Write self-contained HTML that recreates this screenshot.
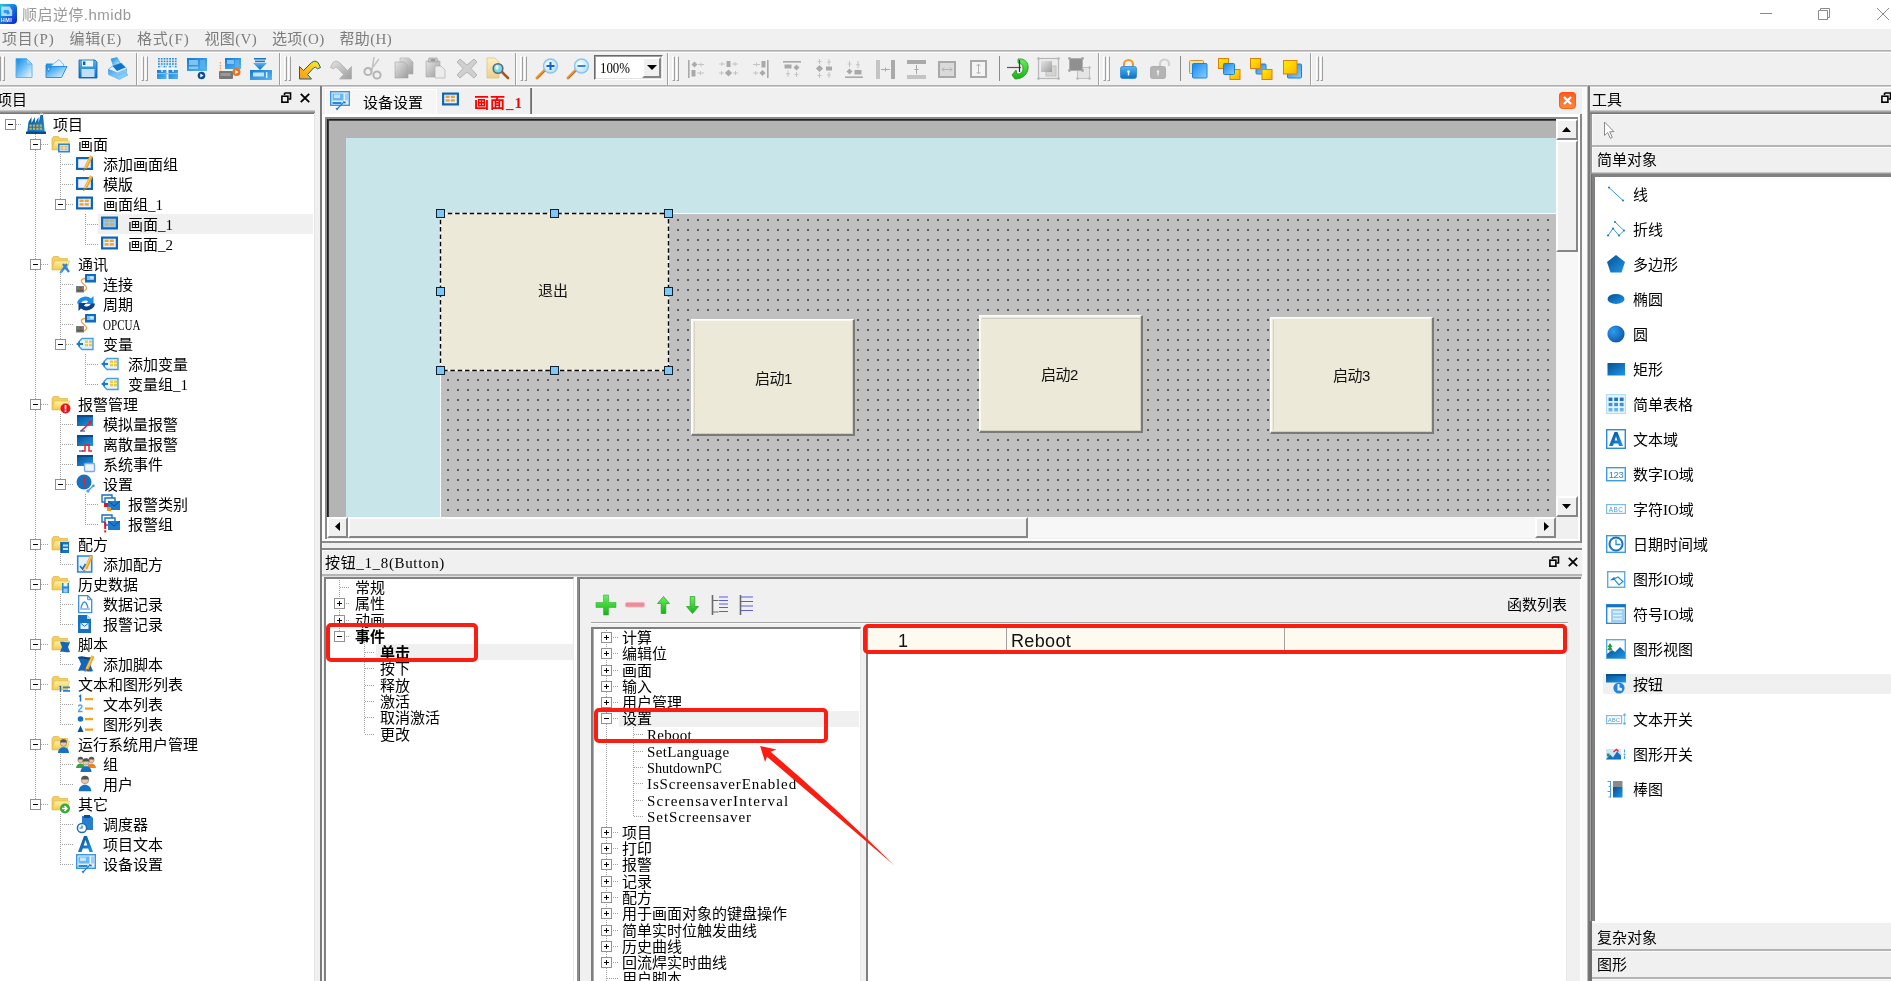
<!DOCTYPE html>
<html lang="zh-CN"><head><meta charset="utf-8"><title>HMI</title>
<style>
html,body{margin:0;padding:0;}
body{width:1891px;height:981px;position:relative;overflow:hidden;background:#f0f0f0;
 font-family:"Liberation Sans","Noto Sans CJK SC",sans-serif;font-size:15px;color:#000;}
div{position:absolute;box-sizing:border-box;}
#root{left:0;top:0;width:1891px;height:981px;will-change:transform;}
svg{position:absolute;overflow:visible;}
.t{white-space:nowrap;line-height:22px;height:22px;font-size:15px;}
.s{font-family:"Liberation Serif",serif;}
.b{font-weight:bold;}
.m{color:#7c7c7c;}
.exp{width:11px;height:11px;border:1px solid #919191;background:#fff;}
.exp i{position:absolute;left:2px;top:4px;width:5px;height:1px;background:#000;}
.exp b{position:absolute;left:4px;top:2px;width:1px;height:5px;background:#000;}
.dv{width:1px;background-image:linear-gradient(#a0a0a0 50%,transparent 50%);background-size:1px 2px;}
.dh{height:1px;background-image:linear-gradient(90deg,#a0a0a0 50%,transparent 50%);background-size:2px 1px;}
.grip{width:7px;height:25px;}
.grip:before,.grip:after{content:"";position:absolute;top:0;width:3px;height:25px;box-sizing:border-box;
 border-left:1px solid #fff;border-top:1px solid #fff;border-right:1px solid #a0a0a0;border-bottom:1px solid #a0a0a0;background:#f0f0f0}
.grip:before{left:0}.grip:after{left:4px}
.sb{background:#f0f0f0;border:2px solid;border-color:#fff #868686 #868686 #fff;}
.btn3d{background:#ece9d8;border-style:solid;border-width:1px 2px 2px 1px;border-color:#fff #7a7a7a #7a7a7a #fff;box-shadow:inset -1px -1px 0 #d2cfbd,inset 1px 1px 0 #f8f7f0;}
.hd{width:9px;height:9px;background:#7fc8f8;border:1px solid #10202c;}
.red{border:4px solid #fb1d12;border-radius:5px;}
</style></head>
<body>
<div id="root">
<svg width="0" height="0" style="left:0;top:0"><defs>
<linearGradient id="gb" x1="0" y1="0" x2="1" y2="1"><stop offset="0" stop-color="#1a8de0"/><stop offset="1" stop-color="#bfe4fb"/></linearGradient>
<linearGradient id="gnew" x1="0" y1="0" x2="1" y2="1"><stop offset="0" stop-color="#0a86e8"/><stop offset=".45" stop-color="#6abcf4"/><stop offset="1" stop-color="#f4fbff"/></linearGradient>
<linearGradient id="gtb" x1="0" y1="0" x2="1" y2="1"><stop offset="0" stop-color="#1478d0"/><stop offset="1" stop-color="#58b6f4"/></linearGradient>
<linearGradient id="gb2" x1="0" y1="0" x2="0" y2="1"><stop offset="0" stop-color="#56b4f0"/><stop offset="1" stop-color="#0b6fc0"/></linearGradient>
<linearGradient id="gb3" x1="0" y1="0" x2="1" y2="1"><stop offset="0" stop-color="#07508f"/><stop offset="1" stop-color="#1e96ec"/></linearGradient>
<linearGradient id="gy" x1="0" y1="0" x2="0" y2="1"><stop offset="0" stop-color="#fff2a8"/><stop offset="1" stop-color="#f2c84a"/></linearGradient>
<linearGradient id="gyp" x1="0" y1="0" x2="0" y2="1"><stop offset="0" stop-color="#fbf0c8"/><stop offset="1" stop-color="#ecd08a"/></linearGradient>
<linearGradient id="go" x1="0" y1="0" x2="0" y2="1"><stop offset="0" stop-color="#ffe23a"/><stop offset="1" stop-color="#f59a1c"/></linearGradient>
<linearGradient id="gyl" x1="0" y1="0" x2="1" y2="1"><stop offset="0" stop-color="#fff200"/><stop offset="1" stop-color="#ffae00"/></linearGradient>
<linearGradient id="gbl" x1="0" y1="0" x2="1" y2="1"><stop offset="0" stop-color="#1486f0"/><stop offset="1" stop-color="#8ad0ff"/></linearGradient>
<linearGradient id="gund" x1="1" y1="0" x2="0" y2="1"><stop offset="0" stop-color="#fff020"/><stop offset="1" stop-color="#f8981c"/></linearGradient>
<linearGradient id="gg" x1="0" y1="0" x2="1" y2="1"><stop offset="0" stop-color="#e4e4e4"/><stop offset="1" stop-color="#9c9c9c"/></linearGradient>
<linearGradient id="ggr" x1="0" y1="0" x2="0" y2="1"><stop offset="0" stop-color="#6cf060"/><stop offset="1" stop-color="#12b412"/></linearGradient>
<linearGradient id="gor" x1="0" y1="0" x2="0" y2="1"><stop offset="0" stop-color="#ff5a1a"/><stop offset="1" stop-color="#ff8a3c"/></linearGradient>
<linearGradient id="gapp" x1="0" y1="0" x2="1" y2="1"><stop offset="0" stop-color="#22d6d4"/><stop offset="0.5" stop-color="#1c74e4"/><stop offset="1" stop-color="#0a1ed0"/></linearGradient>
<radialGradient id="gball" cx="0.35" cy="0.35" r="0.8"><stop offset="0" stop-color="#2f9cf0"/><stop offset="1" stop-color="#0a4fa0"/></radialGradient>
<radialGradient id="glens" cx="0.4" cy="0.4" r="0.7"><stop offset="0" stop-color="#ffffff"/><stop offset="1" stop-color="#a8dcf8"/></radialGradient>
</defs></svg>
<div style="left:0px;top:0px;width:1891px;height:29px;background:#fff;"></div>
<svg style="left:0px;top:4px" width="18" height="20" viewBox="0 0 18 20"><path d="M-2 0h15a4 4 0 0 1 4 4v12a4 4 0 0 1-4 4h-15z" fill="url(#gapp)"/><path d="M1.200 2.500h8.500l2.500 4v5.500h-11z" fill="#bfe2f8" opacity=".9"/><path d="M6.500 4.500a1.700 1.700 0 0 1 1.300 2.800a1.700 1.700 0 0 1-1.300 2.800a1.700 1.700 0 0 1-2.600 0a1.700 1.700 0 0 1 1.300-2.800a1.700 1.700 0 0 1 1.300-2.800z" fill="#2a9cf0" transform="rotate(-90 6.5 7.5) translate(0 0)"/><text x="6.500" y="18.300" font-family="Liberation Sans,sans-serif" font-size="5.500" font-weight="bold" fill="#e8f6ff" text-anchor="middle" letter-spacing=".4">HMI</text></svg>
<div class="t" style="left:22px;top:4px;color:#999;font-size:15px;letter-spacing:.45px;">顺启逆停.hmidb</div>
<svg style="left:1750px;top:0" width="141" height="29" viewBox="1750 0 141 29" fill="none" stroke="#8a8a8a" stroke-width="1"><path d="M1760 13.5H1772"/><path d="M1818.5 10.5h9v9h-9z"/><path d="M1820.500 10.500v-2h9v9h-1.500"/><path d="M1877 8l12 12M1889 8l-12 12"/></svg>
<div style="left:0px;top:29px;width:1891px;height:21px;background:#f0f0f0;"></div>
<div class="t m" style="left:2.0px;top:28px;font-family:'Liberation Serif','Noto Sans CJK SC',serif;letter-spacing:0.83px;">项目(P)</div>
<div class="t m" style="left:69.5px;top:28px;font-family:'Liberation Serif','Noto Sans CJK SC',serif;letter-spacing:0.67px;">编辑(E)</div>
<div class="t m" style="left:137.0px;top:28px;font-family:'Liberation Serif','Noto Sans CJK SC',serif;letter-spacing:0.83px;">格式(F)</div>
<div class="t m" style="left:204.5px;top:28px;font-family:'Liberation Serif','Noto Sans CJK SC',serif;letter-spacing:0.34px;">视图(V)</div>
<div class="t m" style="left:272.0px;top:28px;font-family:'Liberation Serif','Noto Sans CJK SC',serif;letter-spacing:0.34px;">选项(O)</div>
<div class="t m" style="left:339.5px;top:28px;font-family:'Liberation Serif','Noto Sans CJK SC',serif;letter-spacing:0.34px;">帮助(H)</div>
<div style="left:0px;top:50px;width:1891px;height:1px;background:#b0b0b0;"></div>
<div style="left:0px;top:51px;width:1891px;height:1px;background:#cacaca;"></div>
<div style="left:0px;top:52px;width:1891px;height:1px;background:#fdfdfd;"></div>
<div style="left:0px;top:85px;width:1891px;height:1px;background:#b0b0b0;"></div>
<div style="left:0px;top:86px;width:1891px;height:1px;background:#cacaca;"></div>
<div style="left:0px;top:87px;width:1891px;height:1px;background:#fdfdfd;"></div>
<div style="left:136px;top:53px;width:1px;height:32px;background:#a0a0a0;"></div>
<div style="left:137px;top:53px;width:1px;height:32px;background:#fff;"></div>
<div style="left:279px;top:53px;width:1px;height:32px;background:#a0a0a0;"></div>
<div style="left:280px;top:53px;width:1px;height:32px;background:#fff;"></div>
<div style="left:515px;top:53px;width:1px;height:32px;background:#a0a0a0;"></div>
<div style="left:516px;top:53px;width:1px;height:32px;background:#fff;"></div>
<div style="left:667px;top:53px;width:1px;height:32px;background:#a0a0a0;"></div>
<div style="left:668px;top:53px;width:1px;height:32px;background:#fff;"></div>
<div style="left:1098px;top:53px;width:1px;height:32px;background:#a0a0a0;"></div>
<div style="left:1099px;top:53px;width:1px;height:32px;background:#fff;"></div>
<div style="left:1310px;top:53px;width:1px;height:32px;background:#a0a0a0;"></div>
<div style="left:1311px;top:53px;width:1px;height:32px;background:#fff;"></div>
<div class="grip" style="left:-2px;top:56px"></div>
<div class="grip" style="left:141px;top:56px"></div>
<div class="grip" style="left:284px;top:56px"></div>
<div class="grip" style="left:520px;top:56px"></div>
<div class="grip" style="left:672px;top:56px"></div>
<div class="grip" style="left:1103px;top:56px"></div>
<div class="grip" style="left:1316px;top:56px"></div>
<div style="left:999px;top:56px;width:1px;height:25px;background:#8a8a8a;"></div>
<div style="left:1180px;top:56px;width:1px;height:25px;background:#8a8a8a;"></div>
<svg style="left:15px;top:57px" width="18" height="22" viewBox="0 0 18 22"><path d="M1 1.500h10.500l5.500 5.500v13.500h-16z" fill="url(#gnew)" stroke="#5aaeea" stroke-width=".9"/><path d="M11.500 1.500v5.500h5.500z" fill="#9fd4f8" stroke="#5aaeea" stroke-width=".7"/></svg>
<svg style="left:45px;top:58px" width="23" height="21" viewBox="0 0 23 21"><path d="M1 5.500h6.500l1.500 2h4v3h-12z" fill="#2a92e4"/><path d="M6 8l8-6.500 5 5.500-5 5z" fill="#e4f3ff" stroke="#5aaeea" stroke-width=".8"/><path d="M1 7v12.500h15.500l5.500-11h-15.500l-3 5z" fill="url(#gnew)" stroke="#1f86dc" stroke-width=".9" stroke-linejoin="round"/></svg>
<svg style="left:78px;top:59px" width="20" height="20" viewBox="0 0 20 20"><path d="M1 1h16l2 2v16h-18z" fill="url(#gb2)" stroke="#0a5cae" stroke-width=".8"/><rect x="4" y="1.5" width="11" height="6" fill="#eaf6ff"/><rect x="5" y="2.5" width="2.4" height="3.5" fill="#0a5cae"/><rect x="3.5" y="10" width="13" height="8" fill="#bfe0fa"/></svg>
<svg style="left:107px;top:57px" width="22" height="24" viewBox="0 0 22 24"><path d="M4 2l6-1.500 4 7-7 2.500z" fill="url(#gnew)" stroke="#3b9be0" stroke-width=".7"/><path d="M1.500 12l4-3 9-3 5 5.500v5l-9 5-9-4z" fill="#dfefff" stroke="#4aa4e8" stroke-width=".7"/><path d="M5.500 9l8.500-3 4.500 4.500-8.500 3.500z" fill="#0f74c8"/><path d="M1.500 12l9 3.500 9-4v5l-9 5-9-4z" fill="url(#gb)" opacity=".85"/><path d="M8.500 19.500l9-4 3.500 2.500-9 4.500z" fill="#7fd0ff" stroke="#58aee8" stroke-width=".6"/></svg>
<svg style="left:157px;top:58px" width="21" height="22" viewBox="0 0 21 22"><rect x="1.0" y="0.0" width="1.8" height="1.6" fill="#2a90dc"/><rect x="3.8" y="0.0" width="1.8" height="1.6" fill="#2a90dc"/><rect x="6.6" y="0.0" width="1.8" height="1.6" fill="#2a90dc"/><rect x="9.4" y="0.0" width="1.8" height="1.6" fill="#2a90dc"/><rect x="12.2" y="0.0" width="1.8" height="1.6" fill="#2a90dc"/><rect x="15.0" y="0.0" width="1.8" height="1.6" fill="#2a90dc"/><rect x="17.8" y="0.0" width="1.8" height="1.6" fill="#2a90dc"/><rect x="1.0" y="2.6" width="1.8" height="1.6" fill="#2a90dc"/><rect x="3.8" y="2.6" width="1.8" height="1.6" fill="#2a90dc"/><rect x="6.6" y="2.6" width="1.8" height="1.6" fill="#2a90dc"/><rect x="9.4" y="2.6" width="1.8" height="1.6" fill="#2a90dc"/><rect x="12.2" y="2.6" width="1.8" height="1.6" fill="#2a90dc"/><rect x="15.0" y="2.6" width="1.8" height="1.6" fill="#2a90dc"/><rect x="17.8" y="2.6" width="1.8" height="1.6" fill="#2a90dc"/><rect x="1.0" y="5.2" width="1.8" height="1.6" fill="#2a90dc"/><rect x="3.8" y="5.2" width="1.8" height="1.6" fill="#2a90dc"/><rect x="6.6" y="5.2" width="1.8" height="1.6" fill="#2a90dc"/><rect x="9.4" y="5.2" width="1.8" height="1.6" fill="#2a90dc"/><rect x="12.2" y="5.2" width="1.8" height="1.6" fill="#2a90dc"/><rect x="15.0" y="5.2" width="1.8" height="1.6" fill="#2a90dc"/><rect x="17.8" y="5.2" width="1.8" height="1.6" fill="#2a90dc"/><rect x="1.0" y="7.8" width="1.8" height="1.6" fill="#2a90dc"/><rect x="3.8" y="7.8" width="1.8" height="1.6" fill="#2a90dc"/><rect x="6.6" y="7.8" width="1.8" height="1.6" fill="#2a90dc"/><rect x="9.4" y="7.8" width="1.8" height="1.6" fill="#2a90dc"/><rect x="12.2" y="7.8" width="1.8" height="1.6" fill="#2a90dc"/><rect x="15.0" y="7.8" width="1.8" height="1.6" fill="#2a90dc"/><rect x="17.8" y="7.8" width="1.8" height="1.6" fill="#2a90dc"/><rect x="0" y="12" width="9.5" height="9" fill="url(#gtb)"/><rect x="11.5" y="12" width="9.5" height="9" fill="url(#gtb)"/><path d="M5 8v6M10.5 8v7M16 8v6" stroke="#fff" stroke-width="1.2"/><rect x="0" y="15" width="21" height="1.2" fill="#7cc4f4"/></svg>
<svg style="left:187px;top:58px" width="21" height="22" viewBox="0 0 21 22"><rect x="0" y="0" width="20" height="13" fill="url(#gtb)"/><rect x="2" y="2" width="9" height="5" fill="#7cc4f4"/><rect x="13" y="2" width="5" height="9" fill="#5ab2ee" opacity=".8"/><rect x="2" y="8.5" width="9" height="2.5" fill="#9fd4f8" opacity=".8"/><circle cx="14.5" cy="17.5" r="3.8" fill="#0a4f96"/><path d="M13.3 15.5l3.3 2-3.3 2z" fill="#fff"/></svg>
<svg style="left:219px;top:58px" width="22" height="22" viewBox="0 0 22 22"><rect x="6" y="0" width="16" height="11" fill="url(#gtb)"/><rect x="8" y="2" width="7" height="4" fill="#7cc4f4"/><rect x="16" y="2" width="4" height="7" fill="#5ab2ee" opacity=".8"/><path d="M1.5 4v9" stroke="#f5a35a" stroke-width="1.4" stroke-dasharray="1.6 1.2"/><rect x="0" y="13" width="14" height="8" rx="1" fill="#777"/><rect x="1.5" y="15" width="10" height="3" fill="#9a9a9a"/><circle cx="17.5" cy="14" r="4" fill="#f0701c"/><path d="M16.3 12l3.3 2-3.3 2z" fill="#fff"/></svg>
<svg style="left:250px;top:58px" width="22" height="22" viewBox="0 0 22 22"><rect x="4" y="0" width="12" height="1.6" fill="#1478cc"/><rect x="5" y="2.6" width="10" height="1.6" fill="#1478cc"/><path d="M3 5h14l-7 7z" fill="url(#gb2)"/><rect x="0" y="12" width="22" height="10" fill="url(#gtb)"/><rect x="3" y="14.5" width="11" height="4" fill="#bfe4fb"/><rect x="16" y="14" width="1.4" height="6" fill="#d6eefc"/></svg>
<svg style="left:298px;top:58px" width="24" height="22" viewBox="0 0 24 22"><path d="M1.500 21V8.500L5.500 12.500L13.500 4.500Q17 1.500 20 4.500L22.500 9.500L19.500 10.800Q17.500 8 15.500 10L9.500 16.500L13.500 21z" fill="url(#gund)" stroke="#1d5c8c" stroke-width="1" stroke-linejoin="round"/></svg>
<svg style="left:329px;top:58px" width="24" height="22" viewBox="0 0 24 22"><path d="M22.500 21V8.500L18.500 12.500L10.500 4.500Q7 1.500 4 4.500L1.500 9.500L4.500 10.800Q6.500 8 8.500 10L14.500 16.500L10.500 21z" fill="url(#gg)" stroke="#b0b0b0" stroke-width=".8" stroke-linejoin="round"/></svg>
<svg style="left:363px;top:57px" width="20" height="23" viewBox="0 0 20 23"><path d="M11 0l-2 13M16 2l-9 12" stroke="#c4c4c4" stroke-width="1.6" fill="none"/><circle cx="5" cy="14.5" r="3.6" fill="none" stroke="#b4b4b4" stroke-width="2"/><circle cx="14" cy="18" r="3.6" fill="none" stroke="#b4b4b4" stroke-width="2"/></svg>
<svg style="left:394px;top:58px" width="20" height="21" viewBox="0 0 20 21"><path d="M6 0h9l4 4v12h-13z" fill="url(#gg)" stroke="#b0b0b0" stroke-width=".6"/><path d="M1 4h9l4 4v12h-13z" fill="url(#gg)" stroke="#a4a4a4" stroke-width=".6"/></svg>
<svg style="left:425px;top:57px" width="21" height="22" viewBox="0 0 21 22"><path d="M1 4h14v16h-14z" fill="url(#gg)" stroke="#a8a8a8" stroke-width=".6"/><path d="M4 1h8l1 4h-10z" fill="#c8c8c8" stroke="#999" stroke-width=".6"/><ellipse cx="8" cy="3.2" rx="2.6" ry="1.2" fill="#9a9a9a"/><path d="M10 9h6l4 4v8h-10z" fill="#ececec" stroke="#a4a4a4" stroke-width=".6"/></svg>
<svg style="left:456px;top:58px" width="22" height="21" viewBox="0 0 22 21"><path d="M4 1l7 6 7-6 3 3-6 6.5 6 6.5-3 3-7-6-7 6-3-3 6-6.5-6-6.5z" fill="#cfcfcf" stroke="#a8a8a8" stroke-width=".8"/></svg>
<svg style="left:486px;top:57px" width="24" height="23" viewBox="0 0 24 23"><path d="M1 1h8l4 4v16h-12z" fill="url(#gyp)" stroke="#dcc078" stroke-width=".7"/><path d="M15 14l7 7" stroke="#a85a1c" stroke-width="2.6" stroke-linecap="round"/><circle cx="12" cy="11.5" r="4.8" fill="#7fd8e8" stroke="#5a6a78" stroke-width="1.6"/><ellipse cx="11" cy="10.5" rx="1.6" ry="2.4" fill="#d8f8ff"/></svg>
<svg style="left:535px;top:58px" width="24" height="22" viewBox="0 0 24 22"><path d="M2 20l8-8" stroke="#e8922c" stroke-width="3" stroke-linecap="round"/><path d="M2.5 20.5l8-8" stroke="#9a6a3a" stroke-width=".8"/><circle cx="15.5" cy="8" r="7" fill="url(#glens)" stroke="#8cc4ea" stroke-width="1.4"/><path d="M15.5 4v8M11.5 8h8" stroke="#1462c8" stroke-width="2"/></svg>
<svg style="left:566px;top:58px" width="24" height="22" viewBox="0 0 24 22"><path d="M2 20l8-8" stroke="#e8922c" stroke-width="3" stroke-linecap="round"/><path d="M2.5 20.5l8-8" stroke="#9a6a3a" stroke-width=".8"/><circle cx="15.5" cy="8" r="7" fill="url(#glens)" stroke="#8cc4ea" stroke-width="1.4"/><path d="M11.5 8h8" stroke="#3c82d8" stroke-width="2"/></svg>
<svg style="left:688px;top:60px" width="18" height="18" viewBox="0 0 18 18"><rect x="0" y="0" width="1.6" height="18" fill="#a9a9a9"/><path d="M3.5 4.5L6.5 1.5L9.5 4.5L6.5 7.5z" fill="#a9a9a9"/><path d="M10 4.5H16M13.0 2.5V6.5" stroke="#c4c4c4" stroke-width="1" fill="none"/><rect x="3.5" y="10" width="4" height="6.5" fill="#a9a9a9"/><path d="M9 13H16M12.5 11V15" stroke="#c4c4c4" stroke-width="1" fill="none"/></svg>
<svg style="left:719px;top:60px" width="19" height="18" viewBox="0 0 19 18"><rect x="7.5" y="1" width="4" height="6" fill="#a9a9a9"/><path d="M0 4H6M3.0 2V6" stroke="#c4c4c4" stroke-width="1" fill="none"/><path d="M13 4H19M16.0 2V6" stroke="#c4c4c4" stroke-width="1" fill="none"/><path d="M5.9 13L9.5 9.4L13.1 13L9.5 16.6z" fill="#a9a9a9"/><path d="M0 13H5M2.5 11V15" stroke="#c4c4c4" stroke-width="1" fill="none"/><path d="M14 13H19M16.5 11V15" stroke="#c4c4c4" stroke-width="1" fill="none"/></svg>
<svg style="left:752px;top:60px" width="17" height="18" viewBox="0 0 17 18"><rect x="15" y="0" width="1.6" height="18" fill="#a9a9a9"/><rect x="9.5" y="1" width="4" height="6.5" fill="#a9a9a9"/><path d="M1 4.5H8M4.5 2.5V6.5" stroke="#c4c4c4" stroke-width="1" fill="none"/><path d="M7.5 13L10.5 10L13.5 13L10.5 16z" fill="#a9a9a9"/><path d="M1 13H6.5M3.75 11V15" stroke="#c4c4c4" stroke-width="1" fill="none"/></svg>
<svg style="left:783px;top:61px" width="18" height="17" viewBox="0 0 18 17"><rect x="0" y="0" width="18" height="1.6" fill="#a9a9a9"/><rect x="1.5" y="3.5" width="7" height="4" fill="#a9a9a9"/><path d="M10.5 6.5L13.5 3.5L16.5 6.5L13.5 9.5z" fill="#a9a9a9"/><path d="M5 9.5V16M3 12.75H7" stroke="#c4c4c4" stroke-width="1" fill="none"/><path d="M13.5 11V16M11.5 13.5H15.5" stroke="#c4c4c4" stroke-width="1" fill="none"/></svg>
<svg style="left:815px;top:59px" width="18" height="19" viewBox="0 0 18 19"><path d="M0.8999999999999999 9.5L4.5 5.9L8.1 9.5L4.5 13.1z" fill="#a9a9a9"/><rect x="11" y="7.5" width="6" height="4" fill="#a9a9a9"/><path d="M4.5 0V5M2.5 2.5H6.5" stroke="#c4c4c4" stroke-width="1" fill="none"/><path d="M4.5 14V19M2.5 16.5H6.5" stroke="#c4c4c4" stroke-width="1" fill="none"/><path d="M14 0V6M12 3.0H16" stroke="#c4c4c4" stroke-width="1" fill="none"/><path d="M14 13V19M12 16.0H16" stroke="#c4c4c4" stroke-width="1" fill="none"/></svg>
<svg style="left:845px;top:61px" width="18" height="17" viewBox="0 0 18 17"><rect x="0" y="15.4" width="18" height="1.6" fill="#a9a9a9"/><path d="M1.5 10.5L4.5 7.5L7.5 10.5L4.5 13.5z" fill="#a9a9a9"/><rect x="9.5" y="9" width="7" height="4.5" fill="#a9a9a9"/><path d="M4.5 0V6M2.5 3.0H6.5" stroke="#c4c4c4" stroke-width="1" fill="none"/><path d="M13 0V7.5M11 3.75H15" stroke="#c4c4c4" stroke-width="1" fill="none"/></svg>
<svg style="left:876px;top:60px" width="19" height="19" viewBox="0 0 19 19"><rect x="0" y="0" width="4" height="19" fill="#c4c4c4"/><rect x="15" y="0" width="4" height="19" fill="#a9a9a9"/><path d="M5 9.5H14M9.5 7.5V11.5" stroke="#a9a9a9" stroke-width="1" fill="none"/></svg>
<svg style="left:907px;top:60px" width="19" height="19" viewBox="0 0 19 19"><rect x="0" y="0" width="19" height="4" fill="#a9a9a9"/><rect x="0" y="15" width="19" height="4" fill="#c4c4c4"/><path d="M9.5 5V14M7.5 9.5H11.5" stroke="#a9a9a9" stroke-width="1" fill="none"/></svg>
<svg style="left:938px;top:61px" width="18" height="17" viewBox="0 0 18 17"><rect x="1" y="1" width="16" height="15" fill="#dadada" stroke="#a9a9a9" stroke-width="2"/><path d="M4 8.5H14M6 6.5l-2 2 2 2M12 6.5l2 2-2 2" stroke="#b4b4b4" fill="none"/></svg>
<svg style="left:970px;top:60px" width="17" height="18" viewBox="0 0 17 18"><rect x="1" y="1" width="15" height="16" fill="#f4f4f4" stroke="#a9a9a9" stroke-width="2"/><path d="M8.5 4V14M6.5 6l2-2 2 2M6.5 12l2 2 2-2" stroke="#b4b4b4" fill="none"/></svg>
<svg style="left:1007px;top:58px" width="23" height="22" viewBox="0 0 23 22"><path d="M11 1c7-1 11 4 10 10-1 6-6 10-13 10l-3-4 4-5 1 4c4 0 6-2 6-6 0-3-2-5-5-5z" fill="url(#ggr)" stroke="#2a8a24" stroke-width=".8"/><path d="M0 9.5H14" stroke="#555" stroke-width="1.2"/><path d="M12.5 2V14" stroke="#333" stroke-width="1.2"/></svg>
<svg style="left:1037px;top:57px" width="23" height="23" viewBox="0 0 23 23"><rect x="1.5" y="1.5" width="20" height="20" fill="#ececec" stroke="#b8b8b8" stroke-width="1.2"/><rect x="9" y="9" width="10" height="10" fill="#d4d4d4" stroke="#c0c0c0"/><rect x="4" y="4" width="11" height="11" fill="url(#gg)"/><circle cx="1.5" cy="1.5" r="1.3" fill="#b4b4b4"/><circle cx="21.5" cy="1.5" r="1.3" fill="#b4b4b4"/><circle cx="1.5" cy="21.5" r="1.3" fill="#b4b4b4"/><circle cx="21.5" cy="21.5" r="1.3" fill="#b4b4b4"/></svg>
<svg style="left:1068px;top:57px" width="23" height="23" viewBox="0 0 23 23"><rect x="9.5" y="10.5" width="12" height="11" fill="#e4e4e4" stroke="#c0c0c0"/><rect x="1.5" y="1.5" width="13" height="12" fill="#909090" stroke="#b0b0b0"/><circle cx="1.5" cy="1.5" r="1.4" fill="#a4a4a4"/><circle cx="14.5" cy="1.5" r="1.4" fill="#a4a4a4"/><circle cx="1.5" cy="13.5" r="1.4" fill="#a4a4a4"/><circle cx="14.5" cy="13.5" r="1.4" fill="#a4a4a4"/><circle cx="21.5" cy="10.5" r="1.3" fill="#b8b8b8"/><circle cx="9.5" cy="21.5" r="1.3" fill="#b8b8b8"/><circle cx="21.5" cy="21.5" r="1.3" fill="#b8b8b8"/></svg>
<svg style="left:1120px;top:58px" width="17" height="21" viewBox="0 0 17 21"><path d="M4 9V6.5a4.5 4.5 0 0 1 9 0V9" fill="none" stroke="#f39a20" stroke-width="2.2"/><rect x=".5" y="8.5" width="16" height="12" rx="2" fill="url(#gb2)" stroke="#2a86d8" stroke-width=".8"/><circle cx="8.5" cy="13.5" r="1.3" fill="#eaf6ff"/><rect x="7.8" y="14" width="1.4" height="3.4" fill="#eaf6ff"/></svg>
<svg style="left:1150px;top:58px" width="21" height="21" viewBox="0 0 21 21"><path d="M10 9V6a4.5 4.5 0 0 1 9 0V8" fill="none" stroke="#cfcfcf" stroke-width="2.2"/><rect x=".5" y="8.5" width="15" height="12" rx="2" fill="#b4b4b4" stroke="#a4a4a4" stroke-width=".8"/><circle cx="8" cy="13.5" r="1.3" fill="#ededed"/><rect x="7.3" y="14" width="1.4" height="3.4" fill="#ededed"/></svg>
<svg style="left:1189px;top:60px" width="19" height="18" viewBox="0 0 19 18"><rect x=".5" y=".5" width="14" height="13" rx="1" fill="#e8e4b0" stroke="#d49030" stroke-width="1"/><rect x="3.5" y="3.5" width="14.5" height="14.5" rx="1" fill="url(#gbl)" stroke="#1a80e0" stroke-width="1"/></svg>
<svg style="left:1218px;top:58px" width="23" height="22" viewBox="0 0 23 22"><rect x="0.5" y="0.5" width="10" height="10" fill="url(#gyl)" stroke="#d88010" stroke-width="1"/><rect x="12" y="11.5" width="10" height="10" fill="url(#gyl)" stroke="#d88010" stroke-width="1"/><rect x="5.5" y="5.5" width="11" height="11" rx="1" fill="url(#gbl)" stroke="#1a80e0" stroke-width="1"/></svg>
<svg style="left:1250px;top:58px" width="23" height="22" viewBox="0 0 23 22"><rect x="6" y="6" width="10" height="10" rx="1" fill="url(#gbl)" stroke="#1a80e0" stroke-width="1"/><rect x="0.5" y="0.5" width="10" height="10" fill="url(#gyl)" stroke="#d88010" stroke-width="1"/><rect x="12" y="11.5" width="10" height="10" fill="url(#gyl)" stroke="#d88010" stroke-width="1"/></svg>
<svg style="left:1283px;top:60px" width="19" height="18" viewBox="0 0 19 18"><rect x="4.5" y="4" width="14" height="14" rx="1" fill="url(#gbl)" stroke="#1a80e0" stroke-width="1"/><rect x="0.5" y="0.5" width="13.5" height="13.5" fill="url(#gyl)" stroke="#d88010" stroke-width="1"/></svg>
<div style="left:594px;top:55px;width:69px;height:25px;background:#fff;border:1px solid;border-color:#696969 #fff #fff #696969;box-shadow:inset 1px 1px 0 #a0a0a0,inset -1px -1px 0 #e3e3e3"></div>
<div class="t" style="left:600px;top:57px;font-family:'Liberation Serif','Noto Sans CJK SC',serif;transform:scaleX(0.857);transform-origin:0 50%;">100%</div>
<div class="sb" style="left:642px;top:57px;width:19px;height:21px"></div>
<svg style="left:647px;top:65px" width="10" height="5" viewBox="0 0 10 5"><path d="M0 0h10l-5 5z" fill="#000"/></svg>
<div class="t" style="left:-3px;top:89px;">项目</div>
<svg style="left:281px;top:92px" width="10" height="11" viewBox="0 0 10 11"><path d="M3.500 1h6v6h-2M3.500 1v2" stroke="#000" stroke-width="1.600" fill="none"/><rect x=".900" y="4.200" width="6" height="6" fill="none" stroke="#000" stroke-width="1.600"/></svg>
<svg style="left:300px;top:93px" width="10" height="10" viewBox="0 0 10 10"><path d="M.800 .800l8.400 8.400M9.200 .800l-8.400 8.400" stroke="#000" stroke-width="1.800"/></svg>
<div style="left:0px;top:110px;width:315px;height:1px;background:#c8c8c8;"></div>
<div style="left:0px;top:111px;width:315px;height:1px;background:#a8a8a8;"></div>
<div style="left:0px;top:112px;width:315px;height:1px;background:#8c8c8c;"></div>
<div style="left:0px;top:113px;width:315px;height:1px;background:#767676;"></div>
<div style="left:0px;top:114px;width:314px;height:867px;background:#fff;"></div>
<div style="left:314px;top:113px;width:1px;height:868px;background:#e3e3e3;"></div>
<div style="left:320px;top:86px;width:2px;height:895px;background:#7a7a7a;"></div>
<div style="left:322px;top:88px;width:1px;height:893px;background:#fbfbfb;"></div>
<div style="left:98px;top:214px;width:215px;height:20px;background:#f0f0f0;"></div>
<div class="dv" style="left:35px;top:134px;height:670px"></div>
<div class="dv" style="left:60px;top:154px;height:50px"></div>
<div class="dv" style="left:85px;top:214px;height:30px"></div>
<div class="dv" style="left:60px;top:274px;height:70px"></div>
<div class="dv" style="left:85px;top:354px;height:30px"></div>
<div class="dv" style="left:60px;top:414px;height:70px"></div>
<div class="dv" style="left:85px;top:494px;height:30px"></div>
<div class="dv" style="left:60px;top:554px;height:10px"></div>
<div class="dv" style="left:60px;top:594px;height:30px"></div>
<div class="dv" style="left:60px;top:654px;height:10px"></div>
<div class="dv" style="left:60px;top:694px;height:30px"></div>
<div class="dv" style="left:60px;top:754px;height:30px"></div>
<div class="dv" style="left:60px;top:814px;height:50px"></div>
<div class="dh" style="left:10px;top:124px;width:12px"></div>
<div class="exp" style="left:5px;top:119px"><i></i></div>
<svg style="left:26px;top:114px" width="20" height="20" viewBox="0 0 20 20"><path d="M1 20l1.5-12 3-5v6l3.5-6v6l3.5-6v6l2-8h2.5l2 19z" fill="url(#gb3)"/><path d="M0 17.5h20v2.5h-20z" fill="#0a4a8c"/><path d="M13.5 1a2 2 0 0 1 4 0" stroke="#f0b070" stroke-width="1" fill="none"/><rect x="3.5" y="10.5" width="2.2" height="2.2" fill="#d8b040"/><rect x="6.9" y="10.5" width="2.2" height="2.2" fill="#d8b040"/><rect x="10.3" y="10.5" width="2.2" height="2.2" fill="#d8b040"/><rect x="13.7" y="10.5" width="2.2" height="2.2" fill="#d8b040"/><rect x="3.5" y="13.7" width="2.2" height="2.2" fill="#d8b040"/><rect x="6.9" y="13.7" width="2.2" height="2.2" fill="#d8b040"/><rect x="10.3" y="13.7" width="2.2" height="2.2" fill="#d8b040"/><rect x="13.7" y="13.7" width="2.2" height="2.2" fill="#d8b040"/></svg>
<div class="t" style="left:53px;top:114px;">项目</div>
<div class="dh" style="left:35px;top:144px;width:14px"></div>
<div class="exp" style="left:30px;top:139px"><i></i></div>
<svg style="left:51px;top:134px" width="20" height="20" viewBox="0 0 20 20"><path d="M1 4.5l1.5-2h5l1.5 2h7.5v11h-15.5z" fill="#f2cf5e" stroke="#d8ac3c" stroke-width=".6"/><path d="M3.5 7h15l-2.5 9h-15z" fill="url(#gy)" stroke="#e0b848" stroke-width=".6"/><rect x="7.8" y="10.3" width="10.4" height="7.4" fill="#dfeaff" stroke="#2a86d8" stroke-width="1.6"/><rect x="9.3" y="12.0" width="3.3" height="1.6" fill="#e8b84a"/><rect x="13.4" y="12.0" width="3.3" height="1.6" fill="#e8b84a"/><rect x="9.3" y="14.4" width="3.3" height="1.6" fill="#e8b84a"/><rect x="13.4" y="14.4" width="3.3" height="1.6" fill="#e8b84a"/></svg>
<div class="t" style="left:78px;top:134px;">画面</div>
<div class="dh" style="left:60px;top:164px;width:14px"></div>
<svg style="left:76px;top:154px" width="20" height="20" viewBox="0 0 20 20"><rect x="1.1" y="4.1" width="14.8" height="10.8" fill="#eef0ff" stroke="#0f66b4" stroke-width="2.2"/><path d="M9.5 14L15.5 2" stroke="#f5a21c" stroke-width="3.2" stroke-linecap="butt"/><path d="M8.9 14.4L14.9 2.4" stroke="#ffd66a" stroke-width="1"/><path d="M7.7 14.2l-.8 3 2.8-1.4z" fill="#c8742a"/></svg>
<div class="t" style="left:103px;top:154px;">添加画面组</div>
<div class="dh" style="left:60px;top:184px;width:14px"></div>
<svg style="left:76px;top:174px" width="20" height="20" viewBox="0 0 20 20"><rect x="1.1" y="4.1" width="14.8" height="10.8" fill="#eef0ff" stroke="#0f66b4" stroke-width="2.2"/><path d="M9.5 14L15.5 2" stroke="#f5a21c" stroke-width="3.2" stroke-linecap="butt"/><path d="M8.9 14.4L14.9 2.4" stroke="#ffd66a" stroke-width="1"/><path d="M7.7 14.2l-.8 3 2.8-1.4z" fill="#c8742a"/></svg>
<div class="t" style="left:103px;top:174px;">模版</div>
<div class="dh" style="left:60px;top:204px;width:14px"></div>
<div class="exp" style="left:55px;top:199px"><i></i></div>
<svg style="left:76px;top:194px" width="20" height="20" viewBox="0 0 20 20"><rect x="1.1" y="3.6" width="14.8" height="10.8" fill="#e6eeff" stroke="#0f66b4" stroke-width="2.2"/><rect x="3.6" y="5.6" width="4" height="2.4" fill="#f5a21c"/><rect x="8.8" y="5.6" width="4" height="2.4" fill="#f5a21c"/><rect x="3.6" y="9.2" width="4" height="2.4" fill="#f5a21c"/><rect x="8.8" y="9.2" width="4" height="2.4" fill="#f5a21c"/></svg>
<div class="t" style="left:103px;top:194px;font-family:'Liberation Serif','Noto Sans CJK SC',serif;">画面组_1</div>
<div class="dh" style="left:85px;top:224px;width:14px"></div>
<svg style="left:101px;top:214px" width="20" height="20" viewBox="0 0 20 20"><rect x="1.1" y="3.6" width="14.8" height="10.8" fill="#9cc8f4" stroke="#0f66b4" stroke-width="2.2"/><rect x="3.6" y="5.6" width="4" height="2.4" fill="#c8b060"/><rect x="8.8" y="5.6" width="4" height="2.4" fill="#c8b060"/><rect x="3.6" y="9.2" width="4" height="2.4" fill="#c8b060"/><rect x="8.8" y="9.2" width="4" height="2.4" fill="#c8b060"/></svg>
<div class="t" style="left:128px;top:214px;font-family:'Liberation Serif','Noto Sans CJK SC',serif;">画面_1</div>
<div class="dh" style="left:85px;top:244px;width:14px"></div>
<svg style="left:101px;top:234px" width="20" height="20" viewBox="0 0 20 20"><rect x="1.1" y="3.6" width="14.8" height="10.8" fill="#e6eeff" stroke="#0f66b4" stroke-width="2.2"/><rect x="3.6" y="5.6" width="4" height="2.4" fill="#f5a21c"/><rect x="8.8" y="5.6" width="4" height="2.4" fill="#f5a21c"/><rect x="3.6" y="9.2" width="4" height="2.4" fill="#f5a21c"/><rect x="8.8" y="9.2" width="4" height="2.4" fill="#f5a21c"/></svg>
<div class="t" style="left:128px;top:234px;font-family:'Liberation Serif','Noto Sans CJK SC',serif;">画面_2</div>
<div class="dh" style="left:35px;top:264px;width:14px"></div>
<div class="exp" style="left:30px;top:259px"><i></i></div>
<svg style="left:51px;top:254px" width="20" height="20" viewBox="0 0 20 20"><path d="M1 4.5l1.5-2h5l1.5 2h7.5v11h-15.5z" fill="#f2cf5e" stroke="#d8ac3c" stroke-width=".6"/><path d="M3.5 7h15l-2.5 9h-15z" fill="url(#gy)" stroke="#e0b848" stroke-width=".6"/><path d="M10 18l6-8M12 10l6 8" stroke="#2a86d8" stroke-width="2.2"/><path d="M9 19l3-3" stroke="#4aa0e8" stroke-width="2"/></svg>
<div class="t" style="left:78px;top:254px;">通讯</div>
<div class="dh" style="left:60px;top:284px;width:14px"></div>
<svg style="left:76px;top:274px" width="20" height="20" viewBox="0 0 20 20"><rect x="9" y="0" width="11" height="8.500" fill="#0f6cc0"/><rect x="11" y="2" width="7" height="4" fill="#7cc4f4"/><rect x="14" y="2.500" width="3.500" height="2" fill="#d8f0ff"/><rect x="0" y="12" width="8" height="6.500" fill="#7c7c7c"/><rect x="1" y="13" width="2" height="1.600" fill="#3a9a3a"/><rect x="3.500" y="13" width="2" height="1.600" fill="#c03030"/><rect x="1" y="15.500" width="6" height="2" fill="#5a5a5a"/><path d="M9 4.500C4 5 4.500 8 8 10.500S11.500 15 8 17" stroke="#f0a050" stroke-width="1.300" fill="none"/></svg>
<div class="t" style="left:103px;top:274px;">连接</div>
<div class="dh" style="left:60px;top:304px;width:14px"></div>
<svg style="left:76px;top:294px" width="20" height="20" viewBox="0 0 20 20"><path d="M1 9.500a8.500 7.500 0 0 1 14-5l2.500-2.500v8h-8l2.700-2.700a4.800 4.200 0 0 0-7.200 2.200z" fill="#1e8ce8"/><path d="M19 9.500a8.500 7.500 0 0 1-14 5l-2.500 2.500v-8h8l-2.700 2.700a4.800 4.200 0 0 0 7.200-2.200z" fill="#0a4488"/></svg>
<div class="t" style="left:103px;top:294px;">周期</div>
<div class="dh" style="left:60px;top:324px;width:14px"></div>
<svg style="left:76px;top:314px" width="20" height="20" viewBox="0 0 20 20"><rect x="9" y="0" width="11" height="8.500" fill="#0f6cc0"/><rect x="11" y="2" width="7" height="4" fill="#7cc4f4"/><rect x="14" y="2.500" width="3.500" height="2" fill="#d8f0ff"/><rect x="0" y="12" width="8" height="6.500" fill="#7c7c7c"/><rect x="1" y="13" width="2" height="1.600" fill="#3a9a3a"/><rect x="3.500" y="13" width="2" height="1.600" fill="#c03030"/><rect x="1" y="15.500" width="6" height="2" fill="#5a5a5a"/><path d="M9 4.500C4 5 4.500 8 8 10.500S11.500 15 8 17" stroke="#f0a050" stroke-width="1.300" fill="none"/></svg>
<div class="t" style="left:103px;top:314px;font-family:'Liberation Serif','Noto Sans CJK SC',serif;transform:scaleX(0.738);transform-origin:0 50%;">OPCUA</div>
<div class="dh" style="left:60px;top:344px;width:14px"></div>
<div class="exp" style="left:55px;top:339px"><i></i></div>
<svg style="left:76px;top:334px" width="20" height="20" viewBox="0 0 20 20"><path d="M6 4.500h11v11h-11l-3-3v-5z" fill="#e6f2ff" stroke="#4a9ce4" stroke-width="1.4"/><rect x="9" y="6.5" width="3" height="2.4" fill="#eccb3c"/><rect x="13" y="6.5" width="3" height="2.4" fill="#eccb3c"/><rect x="9" y="9.9" width="3" height="2.4" fill="#eccb3c"/><rect x="13" y="9.9" width="3" height="2.4" fill="#eccb3c"/><path d="M0 10l4-3v2h3v2h-3v2z" fill="#1878d0"/></svg>
<div class="t" style="left:103px;top:334px;">变量</div>
<div class="dh" style="left:85px;top:364px;width:14px"></div>
<svg style="left:101px;top:354px" width="20" height="20" viewBox="0 0 20 20"><path d="M6 4.500h11v11h-11l-3-3v-5z" fill="#e6f2ff" stroke="#4a9ce4" stroke-width="1.4"/><rect x="9" y="6.5" width="3" height="2.4" fill="#eccb3c"/><rect x="13" y="6.5" width="3" height="2.4" fill="#eccb3c"/><rect x="9" y="9.9" width="3" height="2.4" fill="#eccb3c"/><rect x="13" y="9.9" width="3" height="2.4" fill="#eccb3c"/><path d="M0 10l4-3v2h3v2h-3v2z" fill="#1878d0"/></svg>
<div class="t" style="left:128px;top:354px;">添加变量</div>
<div class="dh" style="left:85px;top:384px;width:14px"></div>
<svg style="left:101px;top:374px" width="20" height="20" viewBox="0 0 20 20"><path d="M6 4.500h11v11h-11l-3-3v-5z" fill="#e6f2ff" stroke="#4a9ce4" stroke-width="1.4"/><rect x="9" y="6.5" width="3" height="2.4" fill="#eccb3c"/><rect x="13" y="6.5" width="3" height="2.4" fill="#eccb3c"/><rect x="9" y="9.9" width="3" height="2.4" fill="#eccb3c"/><rect x="13" y="9.9" width="3" height="2.4" fill="#eccb3c"/><path d="M0 10l4-3v2h3v2h-3v2z" fill="#1878d0"/></svg>
<div class="t" style="left:128px;top:374px;font-family:'Liberation Serif','Noto Sans CJK SC',serif;">变量组_1</div>
<div class="dh" style="left:35px;top:404px;width:14px"></div>
<div class="exp" style="left:30px;top:399px"><i></i></div>
<svg style="left:51px;top:394px" width="20" height="20" viewBox="0 0 20 20"><path d="M1 4.5l1.5-2h5l1.5 2h7.5v11h-15.5z" fill="#f2cf5e" stroke="#d8ac3c" stroke-width=".6"/><path d="M3.5 7h15l-2.5 9h-15z" fill="url(#gy)" stroke="#e0b848" stroke-width=".6"/><circle cx="14.5" cy="14.5" r="5" fill="#e8141c"/><rect x="13.7" y="11" width="1.6" height="4.4" fill="#fff"/><rect x="13.7" y="16.3" width="1.6" height="1.6" fill="#fff"/></svg>
<div class="t" style="left:78px;top:394px;">报警管理</div>
<div class="dh" style="left:60px;top:424px;width:14px"></div>
<svg style="left:76px;top:414px" width="20" height="20" viewBox="0 0 20 20"><path d="M1 1h16v11h-16z" fill="url(#gb3)"/><path d="M1 1h16v2h-16z" fill="#0a4a8c"/><path d="M5 17l10-9" stroke="#e8202c" stroke-width="1.6"/><path d="M16 6l-1 5-3.5-3.5z" fill="#e8202c"/><path d="M4 17h5" stroke="#2a5a9c" stroke-width="1.2"/></svg>
<div class="t" style="left:103px;top:414px;">模拟量报警</div>
<div class="dh" style="left:60px;top:444px;width:14px"></div>
<svg style="left:76px;top:434px" width="20" height="20" viewBox="0 0 20 20"><path d="M1 1h16v11h-16z" fill="url(#gb3)"/><path d="M1 1h16v2h-16z" fill="#0a4a8c"/><path d="M6 17h3v-6h4v6h3" stroke="#e8202c" stroke-width="1.5" fill="none"/><path d="M3 17h4" stroke="#2a5a9c" stroke-width="1.2"/></svg>
<div class="t" style="left:103px;top:434px;">离散量报警</div>
<div class="dh" style="left:60px;top:464px;width:14px"></div>
<svg style="left:76px;top:454px" width="20" height="20" viewBox="0 0 20 20"><path d="M1 1h16v11h-16z" fill="url(#gb3)"/><path d="M1 1h16v2h-16z" fill="#0a4a8c"/><rect x="8.5" y="9.5" width="10" height="8" rx="1" fill="#eef4ff" stroke="#7aa8ee" stroke-width="1.4"/></svg>
<div class="t" style="left:103px;top:454px;">系统事件</div>
<div class="dh" style="left:60px;top:484px;width:14px"></div>
<div class="exp" style="left:55px;top:479px"><i></i></div>
<svg style="left:76px;top:474px" width="20" height="20" viewBox="0 0 20 20"><circle cx="8" cy="8" r="7.5" fill="#1672c0"/><rect x="7" y="3" width="2" height="6.4" fill="#e8202c"/><rect x="7" y="10.6" width="2" height="2" fill="#e8202c"/><path d="M12 17l5-5" stroke="#4a9ce4" stroke-width="1.4"/><circle cx="12" cy="17" r="1.6" fill="#4a9ce4"/><circle cx="17.4" cy="11.8" r="1.4" fill="#4a9ce4"/></svg>
<div class="t" style="left:103px;top:474px;">设置</div>
<div class="dh" style="left:85px;top:504px;width:14px"></div>
<svg style="left:101px;top:494px" width="20" height="20" viewBox="0 0 20 20"><path d="M1 1h10v7h-10z" fill="#fff" stroke="#1672c0" stroke-width="1.4"/><path d="M4 4h10v7h-10z" fill="#fff" stroke="#1672c0" stroke-width="1.4"/><path d="M7 7h12v9h-12z" fill="#1a7ad0"/><path d="M7 7l6 5 6-5" stroke="#0b4f94" stroke-width="1" fill="none"/><rect x="3" y="9" width="4" height="4" fill="#e8141c"/><rect x="6" y="13" width="4" height="4" fill="#f5901c"/></svg>
<div class="t" style="left:128px;top:494px;">报警类别</div>
<div class="dh" style="left:85px;top:524px;width:14px"></div>
<svg style="left:101px;top:514px" width="20" height="20" viewBox="0 0 20 20"><path d="M1 1h10v7h-10z" fill="#fff" stroke="#1672c0" stroke-width="1.4"/><path d="M4 4h10v7h-10z" fill="#fff" stroke="#1672c0" stroke-width="1.4"/><path d="M7 7h12v9h-12z" fill="#1a7ad0"/><path d="M7 7l6 5 6-5" stroke="#0b4f94" stroke-width="1" fill="none"/><rect x="3.2" y="8" width="2" height="7" fill="#e8141c"/><rect x="3.2" y="16.4" width="2" height="2" fill="#e8141c"/></svg>
<div class="t" style="left:128px;top:514px;">报警组</div>
<div class="dh" style="left:35px;top:544px;width:14px"></div>
<div class="exp" style="left:30px;top:539px"><i></i></div>
<svg style="left:51px;top:534px" width="20" height="20" viewBox="0 0 20 20"><path d="M1 4.5l1.5-2h5l1.5 2h7.5v11h-15.5z" fill="#f2cf5e" stroke="#d8ac3c" stroke-width=".6"/><path d="M3.5 7h15l-2.5 9h-15z" fill="url(#gy)" stroke="#e0b848" stroke-width=".6"/><path d="M10 8h8v11h-8z" fill="#1672c0"/><path d="M12 10.5h5v2h-5zM12 14h5v2h-5z" fill="#bfe0fa"/><path d="M10 8v11" stroke="#0b4f94" stroke-width="1.4"/></svg>
<div class="t" style="left:78px;top:534px;">配方</div>
<div class="dh" style="left:60px;top:564px;width:14px"></div>
<svg style="left:76px;top:554px" width="20" height="20" viewBox="0 0 20 20"><path d="M1.700 2h14v16h-14z" fill="#e6f0ff" stroke="#2a86d8" stroke-width="1.6"/><path d="M4 12l2.5 3 3-5" stroke="#1672c0" stroke-width="1.6" fill="none"/><path d="M9.5 15L15.5 2" stroke="#f5a21c" stroke-width="3.2" stroke-linecap="butt"/><path d="M8.9 15.4L14.9 2.4" stroke="#ffd66a" stroke-width="1"/><path d="M7.7 15.2l-.8 3 2.8-1.4z" fill="#c8742a"/></svg>
<div class="t" style="left:103px;top:554px;">添加配方</div>
<div class="dh" style="left:35px;top:584px;width:14px"></div>
<div class="exp" style="left:30px;top:579px"><i></i></div>
<svg style="left:51px;top:574px" width="20" height="20" viewBox="0 0 20 20"><path d="M1 4.5l1.5-2h5l1.5 2h7.5v11h-15.5z" fill="#f2cf5e" stroke="#d8ac3c" stroke-width=".6"/><path d="M3.5 7h15l-2.5 9h-15z" fill="url(#gy)" stroke="#e0b848" stroke-width=".6"/><path d="M11 9h7v10h-7z" fill="#2a86d8"/><rect x="12.5" y="9" width="4" height="3.4" fill="#dff0ff"/><rect x="12.5" y="14.5" width="4" height="4" fill="#9ccaf4"/></svg>
<div class="t" style="left:78px;top:574px;">历史数据</div>
<div class="dh" style="left:60px;top:604px;width:14px"></div>
<svg style="left:76px;top:594px" width="20" height="20" viewBox="0 0 20 20"><path d="M2.700 1.700h9l4 4v13h-13z" fill="#fff" stroke="#3a8ee0" stroke-width="1.3"/><path d="M11.700 1.700v4h4" fill="none" stroke="#3a8ee0" stroke-width="1"/><path d="M5 14c2-8 5-8 7 0" stroke="#3a8ee0" stroke-width="1.3" fill="none"/><path d="M4 15h10" stroke="#3a8ee0" stroke-width="1"/></svg>
<div class="t" style="left:103px;top:594px;">数据记录</div>
<div class="dh" style="left:60px;top:624px;width:14px"></div>
<svg style="left:76px;top:614px" width="20" height="20" viewBox="0 0 20 20"><path d="M2 1h9l4 4v14h-13z" fill="#1672c0"/><path d="M11 1v4h4z" fill="#bfe0fa"/><rect x="4.500" y="9" width="8" height="6" fill="#e6f2ff"/><path d="M4.500 9l4 3.400 4-3.400" stroke="#1672c0" stroke-width="1" fill="none"/></svg>
<div class="t" style="left:103px;top:614px;">报警记录</div>
<div class="dh" style="left:35px;top:644px;width:14px"></div>
<div class="exp" style="left:30px;top:639px"><i></i></div>
<svg style="left:51px;top:634px" width="20" height="20" viewBox="0 0 20 20"><path d="M1 4.5l1.5-2h5l1.5 2h7.5v11h-15.5z" fill="#f2cf5e" stroke="#d8ac3c" stroke-width=".6"/><path d="M3.5 7h15l-2.5 9h-15z" fill="url(#gy)" stroke="#e0b848" stroke-width=".6"/><path d="M9 8c3-1 6 1 10 0l-2 5 2 5c-4 1-7-1-10 0l2-5z" fill="#1565b8"/></svg>
<div class="t" style="left:78px;top:634px;">脚本</div>
<div class="dh" style="left:60px;top:664px;width:14px"></div>
<svg style="left:76px;top:654px" width="20" height="20" viewBox="0 0 20 20"><path transform="translate(0 1)" d="M2 2c6-2 10 2 15 0l-3 7 3 7c-5 2-9-2-15 0l3-7z" fill="#1565b8"/><path transform="translate(0 1)" d="M2 2c6-2 10 2 15 0l-.8 2c-5 2-9-2-13.400 0z" fill="#0b4480"/><path d="M11 15L17 2" stroke="#f5a21c" stroke-width="3.2" stroke-linecap="butt"/><path d="M10.4 15.4L16.4 2.4" stroke="#ffd66a" stroke-width="1"/><path d="M9.2 15.2l-.8 3 2.8-1.4z" fill="#c8742a"/></svg>
<div class="t" style="left:103px;top:654px;">添加脚本</div>
<div class="dh" style="left:35px;top:684px;width:14px"></div>
<div class="exp" style="left:30px;top:679px"><i></i></div>
<svg style="left:51px;top:674px" width="20" height="20" viewBox="0 0 20 20"><path d="M1 4.5l1.5-2h5l1.5 2h7.5v11h-15.5z" fill="#f2cf5e" stroke="#d8ac3c" stroke-width=".6"/><path d="M3.5 7h15l-2.5 9h-15z" fill="url(#gy)" stroke="#e0b848" stroke-width=".6"/><path d="M9.500 12v6M8.500 13l1-1" stroke="#1672c0" stroke-width="1.400" fill="none"/><rect x="12" y="12.500" width="7" height="1.800" fill="#2a86d8"/><rect x="12" y="16" width="7" height="1.800" fill="#2a86d8"/></svg>
<div class="t" style="left:78px;top:674px;">文本和图形列表</div>
<div class="dh" style="left:60px;top:704px;width:14px"></div>
<svg style="left:76px;top:694px" width="20" height="20" viewBox="0 0 20 20"><path d="M3 2.500l1.500-1v6" stroke="#1672c0" stroke-width="1.500" fill="none"/><path d="M2.500 12.500c0-2 3.500-2 3.500 0 0 1.500-3.500 3-3.500 5h4" stroke="#4aa0f0" stroke-width="1.300" fill="none"/><rect x="9" y="4" width="8" height="2.200" fill="#f5a21c"/><rect x="9" y="13.500" width="8" height="2.200" fill="#f5a21c"/></svg>
<div class="t" style="left:103px;top:694px;">文本列表</div>
<div class="dh" style="left:60px;top:724px;width:14px"></div>
<svg style="left:76px;top:714px" width="20" height="20" viewBox="0 0 20 20"><circle cx="4.500" cy="5" r="2.800" fill="#1672c0"/><path d="M1.500 18l3-6.500 3 6.500z" fill="#0b4f94"/><rect x="9" y="4" width="8" height="2.200" fill="#f5a21c"/><rect x="9" y="14.500" width="8" height="2.200" fill="#f5a21c"/></svg>
<div class="t" style="left:103px;top:714px;">图形列表</div>
<div class="dh" style="left:35px;top:744px;width:14px"></div>
<div class="exp" style="left:30px;top:739px"><i></i></div>
<svg style="left:51px;top:734px" width="20" height="20" viewBox="0 0 20 20"><path d="M1 4.5l1.5-2h5l1.5 2h7.5v11h-15.5z" fill="#f2cf5e" stroke="#d8ac3c" stroke-width=".6"/><path d="M3.5 7h15l-2.5 9h-15z" fill="url(#gy)" stroke="#e0b848" stroke-width=".6"/><path d="M7.0 18.9c0-7.700000000000001 11.0-7.700000000000001 11.0 0z" fill="#1672c0"/><circle cx="12.5" cy="9" r="3.3000000000000003" fill="#e8c8a8" stroke="#666" stroke-width=".5"/><path d="M9.2 8.45a3.3000000000000003 3.3000000000000003 0 0 1 6.6000000000000005 0z" fill="#555"/></svg>
<div class="t" style="left:78px;top:734px;">运行系统用户管理</div>
<div class="dh" style="left:60px;top:764px;width:14px"></div>
<svg style="left:76px;top:754px" width="20" height="20" viewBox="0 0 20 20"><path d="M0.0 14.1c0-6.3 9.0-6.3 9.0 0z" fill="#3aa040"/><circle cx="4.5" cy="6" r="2.7" fill="#e8c8a8" stroke="#666" stroke-width=".5"/><path d="M1.7999999999999998 5.55a2.7 2.7 0 0 1 5.4 0z" fill="#555"/><path d="M11.0 14.1c0-6.3 9.0-6.3 9.0 0z" fill="#f0801c"/><circle cx="15.5" cy="6" r="2.7" fill="#e8c8a8" stroke="#666" stroke-width=".5"/><path d="M12.8 5.55a2.7 2.7 0 0 1 5.4 0z" fill="#555"/><path d="M4.5 17.9c0-7.700000000000001 11.0-7.700000000000001 11.0 0z" fill="#1672c0"/><circle cx="10" cy="8" r="3.3000000000000003" fill="#e8c8a8" stroke="#666" stroke-width=".5"/><path d="M6.699999999999999 7.45a3.3000000000000003 3.3000000000000003 0 0 1 6.6000000000000005 0z" fill="#555"/></svg>
<div class="t" style="left:103px;top:754px;">组</div>
<div class="dh" style="left:60px;top:784px;width:14px"></div>
<svg style="left:76px;top:774px" width="20" height="20" viewBox="0 0 20 20"><path d="M2.75 17.25c0-8.75 12.5-8.75 12.5 0z" fill="#1672c0"/><circle cx="9" cy="6" r="3.75" fill="#e8c8a8" stroke="#666" stroke-width=".5"/><path d="M5.25 5.375a3.75 3.75 0 0 1 7.5 0z" fill="#555"/></svg>
<div class="t" style="left:103px;top:774px;">用户</div>
<div class="dh" style="left:35px;top:804px;width:14px"></div>
<div class="exp" style="left:30px;top:799px"><i></i></div>
<svg style="left:51px;top:794px" width="20" height="20" viewBox="0 0 20 20"><path d="M1 4.5l1.5-2h5l1.5 2h7.5v11h-15.5z" fill="#f2cf5e" stroke="#d8ac3c" stroke-width=".6"/><path d="M3.5 7h15l-2.5 9h-15z" fill="url(#gy)" stroke="#e0b848" stroke-width=".6"/><circle cx="14" cy="14.500" r="5" fill="#3aaa3a"/><path d="M11 14.500h4.500M13.500 12l2.500 2.500-2.500 2.500" stroke="#fff" stroke-width="1.400" fill="none"/></svg>
<div class="t" style="left:78px;top:794px;">其它</div>
<div class="dh" style="left:60px;top:824px;width:14px"></div>
<svg style="left:76px;top:814px" width="20" height="20" viewBox="0 0 20 20"><path d="M6 2h9l2 2v12h-11z" fill="#2a7ed0"/><path d="M8 1h6v3h-6z" fill="#0b4f94"/><circle cx="6" cy="14" r="4.600" fill="#fff" stroke="#1672c0" stroke-width="1.500"/><path d="M6 11.500v2.500h-2.500" stroke="#1672c0" stroke-width="1.200" fill="none"/></svg>
<div class="t" style="left:103px;top:814px;">调度器</div>
<div class="dh" style="left:60px;top:844px;width:14px"></div>
<svg style="left:76px;top:834px" width="20" height="20" viewBox="0 0 20 20"><path d="M2 18l6-16h3l6 16h-3.600l-1.200-3.600h-5.400l-1.200 3.600z" fill="url(#gb3)"/><path d="M7.700 11.500h3.600l-1.800-5.500z" fill="#fff"/></svg>
<div class="t" style="left:103px;top:834px;">项目文本</div>
<div class="dh" style="left:60px;top:864px;width:14px"></div>
<svg style="left:76px;top:854px" width="20" height="20" viewBox="0 0 20 20"><rect x=".700" y=".700" width="18.600" height="13.600" fill="#dff0ff" stroke="#3a94e4" stroke-width="1.400"/><rect x="2.500" y="2.500" width="11" height="7" fill="#6ab8f0"/><rect x="4" y="3.500" width="6" height="3.500" fill="#bfe4fb"/><rect x="15" y="2.500" width="3" height="7" fill="#9ccff4"/><rect x="2.500" y="11" width="9" height="2" fill="#2a86d8"/><path d="M14 11l-7 7" stroke="#2a7ed0" stroke-width="1.100"/><path d="M5.500 17l3 .5-1.500 2z" fill="#1672c0"/><path d="M13 10l3 1-1 2z" fill="#1672c0"/></svg>
<div class="t" style="left:103px;top:854px;">设备设置</div>
<div style="left:326px;top:90px;width:110px;height:24px;background:#f6f6f6;"></div>
<div style="left:326px;top:89px;width:110px;height:1px;background:#fff;"></div>
<div style="left:325px;top:89px;width:1px;height:25px;background:#fff;"></div>
<svg style="left:330px;top:91px" width="20" height="21" viewBox="0 0 20 21"><rect x=".700" y=".700" width="18.600" height="13.600" fill="#dff0ff" stroke="#3a94e4" stroke-width="1.400"/><rect x="2.500" y="2.500" width="11" height="7" fill="#6ab8f0"/><rect x="4" y="3.500" width="6" height="3.500" fill="#bfe4fb"/><rect x="15" y="2.500" width="3" height="7" fill="#9ccff4"/><rect x="2.500" y="11" width="9" height="2" fill="#2a86d8"/><path d="M14 11l-7 7" stroke="#2a7ed0" stroke-width="1.100"/><path d="M5.500 17l3 .5-1.500 2z" fill="#1672c0"/><path d="M13 10l3 1-1 2z" fill="#1672c0"/></svg>
<div class="t" style="left:363px;top:92px;">设备设置</div>
<div style="left:436px;top:89px;width:1px;height:25px;background:#fcfcfc;"></div>
<svg style="left:442px;top:90px" width="20" height="20" viewBox="0 0 20 20"><rect x="1.1" y="3.6" width="14.8" height="10.8" fill="#e6eeff" stroke="#0f66b4" stroke-width="2.2"/><rect x="3.6" y="5.6" width="4" height="2.4" fill="#f5a21c"/><rect x="8.8" y="5.6" width="4" height="2.4" fill="#f5a21c"/><rect x="3.6" y="9.2" width="4" height="2.4" fill="#f5a21c"/><rect x="8.8" y="9.2" width="4" height="2.4" fill="#f5a21c"/></svg>
<div class="t b" style="left:474px;top:92px;color:#ff0000;letter-spacing:1px;font-family:'Liberation Serif','Noto Sans CJK SC',serif;">画面_1</div>
<div style="left:530px;top:88px;width:1px;height:27px;background:#8a8a8a;"></div>
<div style="left:531px;top:88px;width:1px;height:27px;background:#6e6e6e;"></div>
<svg style="left:1559px;top:92px" width="17" height="17" viewBox="0 0 17 17"><rect x="0" y="0" width="17" height="17" rx="4" fill="url(#gor)"/><rect x=".500" y=".500" width="16" height="16" rx="3.500" fill="none" stroke="#ff4a10" stroke-width="1" opacity=".6"/><path d="M5 5l7 7M12 5l-7 7" stroke="#fff" stroke-width="2.300" stroke-linecap="butt"/></svg>
<div style="left:322px;top:114px;width:1260px;height:3px;background:#fff;"></div>
<div style="left:322px;top:114px;width:3px;height:428px;background:#fff;"></div>
<div style="left:325px;top:117px;width:1255px;height:2px;background:#8a8a8a;"></div>
<div style="left:325px;top:117px;width:2px;height:422px;background:#8a8a8a;"></div>
<div style="left:1578px;top:117px;width:2px;height:424px;background:#fff;"></div>
<div style="left:325px;top:539px;width:1255px;height:2px;background:#fff;"></div>
<div style="left:1580px;top:114px;width:2px;height:429px;background:#8a8a8a;"></div>
<div style="left:322px;top:541px;width:1260px;height:2px;background:#8a8a8a;"></div>
<div style="left:327px;top:119px;width:1229px;height:1px;background:#1e1e1e;"></div>
<div style="left:327px;top:120px;width:1229px;height:1px;background:#4c4c4c;"></div>
<div style="left:327px;top:119px;width:1px;height:398px;background:#1e1e1e;"></div>
<div style="left:328px;top:119px;width:1px;height:398px;background:#3a3a3a;"></div>
<div style="left:329px;top:121px;width:1227px;height:396px;background:#b4b4b4;"></div>
<div style="left:346px;top:138px;width:1210px;height:379px;background:#c8e6ea;"></div>
<div style="left:440px;top:213px;width:1116px;height:304px;background:#c0c0c0;"></div>
<svg style="left:440px;top:213px" width="1116" height="304" viewBox="440 213 1116 304"><pattern id="dots" x="7" y="9" width="10" height="10" patternUnits="userSpaceOnUse"><rect x="0" y="0" width="2" height="2" fill="#5a5a5a"/></pattern><rect x="440" y="213" width="1116" height="304" fill="url(#dots)"/></svg>
<div style="left:440px;top:213px;width:1116px;height:1px;background:#fff;"></div>
<div style="left:440px;top:213px;width:1px;height:304px;background:#fff;"></div>
<div style="left:441px;top:214px;width:227px;height:156px;background:#ece9d8;"></div>
<div class="t" style="left:538px;top:280px;color:#111;">退出</div>
<svg style="left:436px;top:209px" width="238" height="166" viewBox="0 0 238 166"><rect x="4.500" y="4.500" width="228" height="157" fill="none" stroke="#fff" stroke-width="1.400"/><rect x="4.500" y="4.500" width="228" height="157" fill="none" stroke="#000" stroke-width="1.400" stroke-dasharray="4.500 2.800"/></svg>
<div class="hd" style="left:436px;top:209px"></div>
<div class="hd" style="left:436px;top:287px"></div>
<div class="hd" style="left:436px;top:366px"></div>
<div class="hd" style="left:550px;top:209px"></div>
<div class="hd" style="left:550px;top:366px"></div>
<div class="hd" style="left:664px;top:209px"></div>
<div class="hd" style="left:664px;top:287px"></div>
<div class="hd" style="left:664px;top:366px"></div>
<div class="btn3d" style="left:691px;top:319px;width:164px;height:117px"></div>
<div class="t" style="left:755px;top:368px;color:#111;letter-spacing:-.5px;">启动1</div>
<div class="btn3d" style="left:979px;top:315px;width:164px;height:118px"></div>
<div class="t" style="left:1041px;top:364px;color:#111;letter-spacing:-.5px;">启动2</div>
<div class="btn3d" style="left:1270px;top:317px;width:164px;height:117px"></div>
<div class="t" style="left:1333px;top:365px;color:#111;letter-spacing:-.5px;">启动3</div>
<div style="left:694px;top:322px;width:1px;height:110px;background:#d6d3c6;"></div>
<div style="left:982px;top:318px;width:158px;height:1px;background:#d0cec4;"></div>
<div style="left:1273px;top:320px;width:1px;height:110px;background:#d6d3c6;"></div>
<div style="left:1556px;top:119px;width:22px;height:398px;background:#f7f7f7;"></div>
<div class="sb" style="left:1556px;top:119px;width:22px;height:21px"></div>
<svg style="left:1562px;top:127px" width="9" height="5" viewBox="0 0 9 5"><path d="M0 5h9l-4.500-5z" fill="#000"/></svg>
<div class="sb" style="left:1556px;top:140px;width:22px;height:112px"></div>
<div class="sb" style="left:1556px;top:496px;width:22px;height:21px"></div>
<svg style="left:1562px;top:504px" width="9" height="5" viewBox="0 0 9 5"><path d="M0 0h9l-4.500 5z" fill="#000"/></svg>
<div style="left:327px;top:517px;width:1229px;height:21px;background:#f7f7f7;"></div>
<div class="sb" style="left:327px;top:517px;width:21px;height:21px"></div>
<svg style="left:335px;top:522px" width="5" height="9" viewBox="0 0 5 9"><path d="M5 0v9l-5-4.500z" fill="#000"/></svg>
<div class="sb" style="left:348px;top:517px;width:680px;height:21px"></div>
<div class="sb" style="left:1535px;top:517px;width:21px;height:21px"></div>
<svg style="left:1544px;top:522px" width="5" height="9" viewBox="0 0 5 9"><path d="M0 0v9l5-4.500z" fill="#000"/></svg>
<div style="left:1556px;top:517px;width:22px;height:22px;background:#f0f0f0;"></div>
<div style="left:1582px;top:88px;width:5px;height:893px;background:#fafafa;"></div>
<div style="left:1587px;top:87px;width:1px;height:894px;background:#b8b8b8;"></div>
<div style="left:1588px;top:86px;width:2px;height:895px;background:#7c7c7c;"></div>
<div style="left:322px;top:548px;width:1260px;height:2px;background:#868686;"></div>
<div style="left:322px;top:550px;width:1260px;height:1px;background:#fbfbfb;"></div>
<div class="t" style="left:325px;top:552px;font-family:'Liberation Serif','Noto Sans CJK SC',serif;letter-spacing:0.65px;">按钮_1_8(Button)</div>
<svg style="left:1549px;top:556px" width="10" height="11" viewBox="0 0 10 11"><path d="M3.500 1h6v6h-2M3.500 1v2" stroke="#000" stroke-width="1.600" fill="none"/><rect x=".900" y="4.200" width="6" height="6" fill="none" stroke="#000" stroke-width="1.600"/></svg>
<svg style="left:1568px;top:557px" width="10" height="10" viewBox="0 0 10 10"><path d="M.800 .800l8.400 8.400M9.200 .800l-8.400 8.400" stroke="#000" stroke-width="1.800"/></svg>
<div style="left:322px;top:574px;width:1260px;height:2px;background:#b4b4b4;"></div>
<div style="left:322px;top:576px;width:1260px;height:1px;background:#e0e0e0;"></div>
<div style="left:324px;top:577px;width:250px;height:410px;background:#fff;border-left:2px solid #808080;border-top:2px solid #808080;border-right:1px solid #e8e8e8;border-bottom:1px solid #e8e8e8;"></div>
<div style="left:574px;top:577px;width:3px;height:410px;background:#fff;"></div>
<div style="left:376px;top:644px;width:197px;height:16px;background:#f0f0f0;"></div>
<div class="dv" style="left:339px;top:580px;height:55px"></div>
<div class="dv" style="left:364px;top:642px;height:91px"></div>
<div class="dh" style="left:340px;top:587px;width:10px"></div>
<div class="t" style="left:355px;top:577px;height:18px;overflow:hidden;">常规</div>
<div class="dh" style="left:340px;top:603px;width:10px"></div>
<div class="exp" style="left:334px;top:598px"><i></i><b></b></div>
<div class="t" style="left:355px;top:593px;height:18px;overflow:hidden;">属性</div>
<div class="dh" style="left:340px;top:620px;width:10px"></div>
<div class="exp" style="left:334px;top:615px"><i></i><b></b></div>
<div class="t" style="left:355px;top:610px;height:18px;overflow:hidden;">动画</div>
<div class="dh" style="left:340px;top:636px;width:10px"></div>
<div class="exp" style="left:334px;top:631px"><i></i></div>
<div class="t b" style="left:355px;top:626px;">事件</div>
<div class="dh" style="left:365px;top:652px;width:10px"></div>
<div class="t b" style="left:380px;top:642px;">单击</div>
<div class="dh" style="left:365px;top:668px;width:10px"></div>
<div class="t" style="left:380px;top:658px;">按下</div>
<div class="dh" style="left:365px;top:685px;width:10px"></div>
<div class="t" style="left:380px;top:675px;">释放</div>
<div class="dh" style="left:365px;top:701px;width:10px"></div>
<div class="t" style="left:380px;top:691px;">激活</div>
<div class="dh" style="left:365px;top:717px;width:10px"></div>
<div class="t" style="left:380px;top:707px;">取消激活</div>
<div class="dh" style="left:365px;top:734px;width:10px"></div>
<div class="t" style="left:380px;top:724px;">更改</div>
<div style="left:577px;top:577px;width:2px;height:410px;background:#8c8c8c;"></div>
<div style="left:579px;top:579px;width:1px;height:410px;background:#747474;"></div>
<div style="left:577px;top:577px;width:1004px;height:2px;background:#808080;"></div>
<div style="left:1580px;top:579px;width:2px;height:410px;background:#fcfcfc;"></div>
<svg style="left:596px;top:595px" width="20" height="20" viewBox="0 0 20 20"><path d="M7.500 0h5v7.500h7.500v5h-7.500v7.500h-5v-7.500h-7.500v-5h7.500z" fill="url(#ggr)" stroke="#3ab03a" stroke-width=".6"/></svg>
<svg style="left:625px;top:602px" width="20" height="6" viewBox="0 0 20 6"><rect x=".400" y=".400" width="19.200" height="4.600" rx="1.500" fill="#f08a96" stroke="#f4b4bc" stroke-width=".8"/></svg>
<svg style="left:657px;top:596px" width="13" height="18" viewBox="0 0 13 18"><path d="M6.500 .500l6 7h-3.700v10h-4.600v-10h-3.700z" fill="url(#ggr)" stroke="#2a9a2a" stroke-width=".7"/></svg>
<svg style="left:686px;top:596px" width="13" height="18" viewBox="0 0 13 18"><path d="M6.500 17.500l6-7h-3.700v-10h-4.600v10h-3.700z" fill="url(#ggr)" stroke="#2a9a2a" stroke-width=".7"/></svg>
<svg style="left:711px;top:595px" width="18" height="20" viewBox="0 0 18 20"><path d="M1.500 0v20" stroke="#6a6a6a" stroke-width="1.600"/><path d="M1.500 5.500h6M1.500 17h6" stroke="#6a6a6a" stroke-width="1"/><path d="M8 2h9M8 5.500h9M8 9h9M8 12.500h9M8 16.500h9" stroke="#5a5ae8" stroke-width="1"/></svg>
<svg style="left:739px;top:595px" width="14" height="20" viewBox="0 0 14 20"><path d="M1.500 0v20" stroke="#6a6a6a" stroke-width="1.600"/><path d="M2 2h12M2 6.500h12M2 11h12M2 15.500h12" stroke="#5a5ae8" stroke-width="1"/></svg>
<div class="t" style="left:1507px;top:594px;">函数列表</div>
<div style="left:591px;top:622px;width:977px;height:1px;background:#a4a4a4;"></div>
<div style="left:591px;top:623px;width:977px;height:1px;background:#fbfbfb;"></div>
<div style="left:591px;top:627px;width:270px;height:360px;background:#fff;border-left:2px solid #808080;border-top:2px solid #808080;border-right:1px solid #e8e8e8;border-bottom:1px solid #e8e8e8;"></div>
<div style="left:593px;top:629px;width:1px;height:360px;background:#b0b0b0;"></div>
<div style="left:619px;top:711px;width:240px;height:16px;background:#f0f0f0;"></div>
<div class="dv" style="left:606px;top:630px;height:351px"></div>
<div class="dv" style="left:633px;top:727px;height:89px"></div>
<div class="dh" style="left:607px;top:637px;width:12px"></div>
<div class="exp" style="left:601px;top:632px"><i></i><b></b></div>
<div class="t" style="left:622px;top:627px;height:19px;overflow:hidden;">计算</div>
<div class="dh" style="left:607px;top:653px;width:12px"></div>
<div class="exp" style="left:601px;top:648px"><i></i><b></b></div>
<div class="t" style="left:622px;top:643px;height:19px;overflow:hidden;">编辑位</div>
<div class="dh" style="left:607px;top:670px;width:12px"></div>
<div class="exp" style="left:601px;top:665px"><i></i><b></b></div>
<div class="t" style="left:622px;top:660px;height:19px;overflow:hidden;">画面</div>
<div class="dh" style="left:607px;top:686px;width:12px"></div>
<div class="exp" style="left:601px;top:681px"><i></i><b></b></div>
<div class="t" style="left:622px;top:676px;height:19px;overflow:hidden;">输入</div>
<div class="dh" style="left:607px;top:702px;width:12px"></div>
<div class="exp" style="left:601px;top:697px"><i></i><b></b></div>
<div class="t" style="left:622px;top:692px;height:19px;overflow:hidden;">用户管理</div>
<div class="dh" style="left:607px;top:718px;width:12px"></div>
<div class="exp" style="left:601px;top:713px"><i></i></div>
<div class="t" style="left:622px;top:708px;height:19px;overflow:hidden;">设置</div>
<div class="dh" style="left:634px;top:734px;width:10px"></div>
<div class="t" style="left:647px;top:724px;font-family:'Liberation Serif','Noto Sans CJK SC',serif;letter-spacing:0.28px;">Reboot</div>
<div class="dh" style="left:634px;top:751px;width:10px"></div>
<div class="t" style="left:647px;top:741px;font-family:'Liberation Serif','Noto Sans CJK SC',serif;letter-spacing:0.38px;">SetLanguage</div>
<div class="dh" style="left:634px;top:767px;width:10px"></div>
<div class="t" style="left:647px;top:757px;font-family:'Liberation Serif','Noto Sans CJK SC',serif;transform:scaleX(0.947);transform-origin:0 50%;">ShutdownPC</div>
<div class="dh" style="left:634px;top:783px;width:10px"></div>
<div class="t" style="left:647px;top:773px;font-family:'Liberation Serif','Noto Sans CJK SC',serif;letter-spacing:0.88px;">IsScreensaverEnabled</div>
<div class="dh" style="left:634px;top:800px;width:10px"></div>
<div class="t" style="left:647px;top:790px;font-family:'Liberation Serif','Noto Sans CJK SC',serif;letter-spacing:1.23px;">ScreensaverInterval</div>
<div class="dh" style="left:634px;top:816px;width:10px"></div>
<div class="t" style="left:647px;top:806px;font-family:'Liberation Serif','Noto Sans CJK SC',serif;letter-spacing:0.96px;">SetScreensaver</div>
<div class="dh" style="left:607px;top:832px;width:12px"></div>
<div class="exp" style="left:601px;top:827px"><i></i><b></b></div>
<div class="t" style="left:622px;top:822px;height:19px;overflow:hidden;">项目</div>
<div class="dh" style="left:607px;top:848px;width:12px"></div>
<div class="exp" style="left:601px;top:843px"><i></i><b></b></div>
<div class="t" style="left:622px;top:838px;height:19px;overflow:hidden;">打印</div>
<div class="dh" style="left:607px;top:864px;width:12px"></div>
<div class="exp" style="left:601px;top:859px"><i></i><b></b></div>
<div class="t" style="left:622px;top:854px;height:19px;overflow:hidden;">报警</div>
<div class="dh" style="left:607px;top:881px;width:12px"></div>
<div class="exp" style="left:601px;top:876px"><i></i><b></b></div>
<div class="t" style="left:622px;top:871px;height:19px;overflow:hidden;">记录</div>
<div class="dh" style="left:607px;top:897px;width:12px"></div>
<div class="exp" style="left:601px;top:892px"><i></i><b></b></div>
<div class="t" style="left:622px;top:887px;height:19px;overflow:hidden;">配方</div>
<div class="dh" style="left:607px;top:913px;width:12px"></div>
<div class="exp" style="left:601px;top:908px"><i></i><b></b></div>
<div class="t" style="left:622px;top:903px;height:19px;overflow:hidden;">用于画面对象的键盘操作</div>
<div class="dh" style="left:607px;top:930px;width:12px"></div>
<div class="exp" style="left:601px;top:925px"><i></i><b></b></div>
<div class="t" style="left:622px;top:920px;height:19px;overflow:hidden;">简单实时位触发曲线</div>
<div class="dh" style="left:607px;top:946px;width:12px"></div>
<div class="exp" style="left:601px;top:941px"><i></i><b></b></div>
<div class="t" style="left:622px;top:936px;height:19px;overflow:hidden;">历史曲线</div>
<div class="dh" style="left:607px;top:962px;width:12px"></div>
<div class="exp" style="left:601px;top:957px"><i></i><b></b></div>
<div class="t" style="left:622px;top:952px;height:19px;overflow:hidden;">回流焊实时曲线</div>
<div class="dh" style="left:607px;top:978px;width:12px"></div>
<div class="t" style="left:622px;top:968px;height:19px;overflow:hidden;">用户脚本</div>
<div style="left:866px;top:626px;width:701px;height:362px;background:#fff;border-left:2px solid #808080;border-top:2px solid #808080;border-right:1px solid #e8e8e8;border-bottom:1px solid #e8e8e8;"></div>
<div style="left:868px;top:628px;width:697px;height:22px;background:#fffaf0;"></div>
<div style="left:1006px;top:628px;width:1px;height:22px;background:#a0a0a0;"></div>
<div style="left:1284px;top:628px;width:1px;height:22px;background:#a0a0a0;"></div>
<div class="t" style="left:898px;top:630px;font-size:18px;line-height:22px;color:#111;">1</div>
<div class="t" style="left:1011px;top:630px;font-size:18px;line-height:22px;color:#111;letter-spacing:.35px;">Reboot</div>
<div class="red" style="left:326px;top:623px;width:152px;height:39px"></div>
<div class="red" style="left:594px;top:708px;width:234px;height:35px"></div>
<div class="red" style="left:863px;top:624px;width:704px;height:30px"></div>
<svg style="left:750px;top:740px" width="150" height="130" viewBox="750 740 150 130"><path d="M760.100 746.100L776.600 749.500L770.600 751.800Q834.500 806.400 894.500 865.400L767 756.800L765.100 762z" fill="#fb1d12"/></svg>
<div class="t" style="left:1592px;top:89px;">工具</div>
<svg style="left:1881px;top:92px" width="10" height="11" viewBox="0 0 10 11"><path d="M3.500 1h6v6h-2M3.500 1v2" stroke="#000" stroke-width="1.600" fill="none"/><rect x=".900" y="4.200" width="6" height="6" fill="none" stroke="#000" stroke-width="1.600"/></svg>
<div style="left:1590px;top:110px;width:301px;height:1px;background:#c8c8c8;"></div>
<div style="left:1590px;top:111px;width:301px;height:1px;background:#a8a8a8;"></div>
<div style="left:1590px;top:112px;width:301px;height:1px;background:#8c8c8c;"></div>
<div style="left:1590px;top:113px;width:301px;height:1px;background:#767676;"></div>
<div style="left:1590px;top:114px;width:2px;height:60px;background:#9a9a9a;"></div>
<div style="left:1592px;top:114px;width:1px;height:60px;background:#fafafa;"></div>
<div style="left:1592px;top:114px;width:299px;height:1px;background:#fafafa;"></div>
<svg style="left:1603px;top:121px" width="12" height="19" viewBox="0 0 12 19"><path d="M1.500 1v13.500l3.200-3 2.600 5.800 2-.9-2.600-5.700h4.300z" fill="#fff" stroke="#8a8a8a" stroke-width="1" stroke-linejoin="round"/></svg>
<div style="left:1592px;top:145px;width:299px;height:2px;background:#b4b4b4;"></div>
<div style="left:1592px;top:147px;width:299px;height:1px;background:#fbfbfb;"></div>
<div class="t" style="left:1597px;top:149px;">简单对象</div>
<div style="left:1592px;top:172px;width:299px;height:1px;background:#c8c8c8;"></div>
<div style="left:1590px;top:173px;width:301px;height:1px;background:#9c9c9c;"></div>
<div style="left:1590px;top:174px;width:301px;height:747px;background:#fff;border-left:5px solid #808080;border-top:3px solid #808080;"></div>
<div style="left:1590px;top:174px;width:1px;height:747px;background:#a4a4a4;"></div>
<div style="left:1591px;top:174px;width:1px;height:747px;background:#6e6e6e;"></div>
<div style="left:1603px;top:674px;width:288px;height:20px;background:#f0f0f0;"></div>
<svg style="left:1606px;top:184px" width="20" height="20" viewBox="0 0 20 20"><path d="M3 3.500L17 16.500" stroke="#3a94dc" stroke-width="1"/><circle cx="3" cy="3.500" r="1.100" fill="#2a7cc8"/><circle cx="17" cy="16.500" r="1.100" fill="#2a7cc8"/></svg>
<div class="t" style="left:1633px;top:184px;">线</div>
<svg style="left:1606px;top:219px" width="20" height="20" viewBox="0 0 20 20"><path d="M2 16.500L7 9.500L13 16.500L18 11.500L9 3" stroke="#3a9ce4" stroke-width="1" fill="none"/><circle cx="2" cy="16.500" r="1.100" fill="#2a7cc8"/><circle cx="7" cy="9.500" r="1.100" fill="#2a7cc8"/><circle cx="13" cy="16.500" r="1.100" fill="#2a7cc8"/><circle cx="18" cy="11.500" r="1.100" fill="#2a7cc8"/><circle cx="9" cy="3" r="1.100" fill="#2a7cc8"/></svg>
<div class="t" style="left:1633px;top:219px;">折线</div>
<svg style="left:1606px;top:254px" width="20" height="20" viewBox="0 0 20 20"><path d="M10 1L19 8L15.500 18.500H4.500L1 8z" fill="url(#gb3)"/></svg>
<div class="t" style="left:1633px;top:254px;">多边形</div>
<svg style="left:1606px;top:289px" width="20" height="20" viewBox="0 0 20 20"><ellipse cx="10" cy="10" rx="8.500" ry="5" fill="url(#gb3)"/></svg>
<div class="t" style="left:1633px;top:289px;">椭圆</div>
<svg style="left:1606px;top:324px" width="20" height="20" viewBox="0 0 20 20"><circle cx="10" cy="10" r="8.600" fill="url(#gball)"/></svg>
<div class="t" style="left:1633px;top:324px;">圆</div>
<svg style="left:1606px;top:359px" width="20" height="20" viewBox="0 0 20 20"><rect x="1.500" y="4" width="17.500" height="12.500" fill="url(#gb3)"/></svg>
<div class="t" style="left:1633px;top:359px;">矩形</div>
<svg style="left:1606px;top:394px" width="20" height="20" viewBox="0 0 20 20"><rect x=".500" y=".500" width="19" height="19" fill="#e4f2fc" stroke="#b4dcf6" stroke-width="1"/><rect x="2.6" y="3.6" width="3.800" height="3.400" fill="#1a74c0"/><rect x="8.2" y="3.6" width="3.800" height="3.400" fill="#1a74c0"/><rect x="13.8" y="3.6" width="3.800" height="3.400" fill="#1a74c0"/><rect x="2.6" y="8.8" width="3.800" height="3.400" fill="#3a94d8"/><rect x="8.2" y="8.8" width="3.800" height="3.400" fill="#3a94d8"/><rect x="13.8" y="8.8" width="3.800" height="3.400" fill="#3a94d8"/><rect x="2.6" y="14.0" width="3.800" height="3.400" fill="#6ab4e8"/><rect x="8.2" y="14.0" width="3.800" height="3.400" fill="#6ab4e8"/><rect x="13.8" y="14.0" width="3.800" height="3.400" fill="#6ab4e8"/></svg>
<div class="t" style="left:1633px;top:394px;">简单表格</div>
<svg style="left:1606px;top:429px" width="20" height="20" viewBox="0 0 20 20"><rect x=".700" y=".700" width="18.600" height="18.600" fill="#fff" stroke="#2a8cd8" stroke-width="1.400"/><path d="M3 17l5.500-14h3l5.500 14h-4l-.8-2.600h-4.400l-.8 2.600z" fill="url(#gb3)"/><path d="M8.700 11.500h2.600l-1.300-4z" fill="#fff"/></svg>
<div class="t" style="left:1633px;top:429px;">文本域</div>
<svg style="left:1606px;top:464px" width="20" height="20" viewBox="0 0 20 20"><rect x=".700" y="3.700" width="18.600" height="13" fill="#fff" stroke="#3a9ce4" stroke-width="1.400"/><text x="10" y="14" font-family="Liberation Sans,sans-serif" font-size="9.500" fill="#2a84d4" text-anchor="middle" letter-spacing="-.4">123</text></svg>
<div class="t" style="left:1633px;top:464px;font-family:'Liberation Serif','Noto Sans CJK SC',serif;">数字IO域</div>
<svg style="left:1606px;top:499px" width="20" height="20" viewBox="0 0 20 20"><rect x=".600" y="5.600" width="18.800" height="8.800" fill="#fff" stroke="#7abcf0" stroke-width="1.200"/><text x="10" y="12.800" font-family="Liberation Sans,sans-serif" font-size="6.500" fill="#4a9ce4" text-anchor="middle" letter-spacing=".3">ABC</text></svg>
<div class="t" style="left:1633px;top:499px;font-family:'Liberation Serif','Noto Sans CJK SC',serif;">字符IO域</div>
<svg style="left:1606px;top:534px" width="20" height="20" viewBox="0 0 20 20"><rect x=".700" y="1.700" width="18.600" height="16.600" fill="#fff" stroke="#3a9ce4" stroke-width="1.400"/><circle cx="10" cy="10" r="6.500" fill="#fff" stroke="#1672c0" stroke-width="2"/><path d="M10 5.500V10.500H14.500" stroke="#2a8cd8" stroke-width="1.300" fill="none"/></svg>
<div class="t" style="left:1633px;top:534px;">日期时间域</div>
<svg style="left:1606px;top:569px" width="20" height="20" viewBox="0 0 20 20"><rect x="1.700" y="2.700" width="17" height="15.600" fill="#fff" stroke="#5aace8" stroke-width="1.400"/><path d="M4 11.500l4-3.500 3 2.500z" fill="#1672c0"/><path d="M8 10l4-2 5 4.500-4 3.500z" fill="#fff" stroke="#2a8cd8" stroke-width="1.200"/></svg>
<div class="t" style="left:1633px;top:569px;font-family:'Liberation Serif','Noto Sans CJK SC',serif;">图形IO域</div>
<svg style="left:1606px;top:604px" width="20" height="20" viewBox="0 0 20 20"><rect x=".700" y=".700" width="18.600" height="18.600" fill="#fff" stroke="#2a8cd8" stroke-width="1.400"/><rect x=".700" y=".700" width="18.600" height="2.600" fill="#1672c0"/><rect x="5" y="5" width="13" height="13" fill="#9cd0f6"/><path d="M7 8h9M7 11.500h9M7 15h9" stroke="#e4f2fc" stroke-width="1.600"/></svg>
<div class="t" style="left:1633px;top:604px;font-family:'Liberation Serif','Noto Sans CJK SC',serif;">符号IO域</div>
<svg style="left:1606px;top:639px" width="20" height="20" viewBox="0 0 20 20"><rect x=".700" y=".700" width="18.600" height="18.600" fill="#fff" stroke="#5aace8" stroke-width="1.400"/><path d="M1 15l5-4 3 2 5-5 5 5v6h-18z" fill="url(#gb3)"/><path d="M4 4l-2.500 4h1.500l-1.500 3h5l-1.500-3h1.500z" fill="#2a9a3a"/><rect x="3.500" y="11" width="1" height="2" fill="#2a9a3a"/></svg>
<div class="t" style="left:1633px;top:639px;">图形视图</div>
<svg style="left:1606px;top:674px" width="20" height="20" viewBox="0 0 20 20"><rect x="0" y="0" width="20" height="8.500" fill="url(#gb3)"/><rect x="0" y="0" width="20" height="2" fill="#0b4f94"/><circle cx="13" cy="14" r="5.600" fill="#2a84d4"/><path d="M11.500 16.500v-6.500h2v3.500l2.500.8v2.500z" fill="#dff0ff"/></svg>
<div class="t" style="left:1633px;top:674px;">按钮</div>
<svg style="left:1606px;top:709px" width="20" height="20" viewBox="0 0 20 20"><rect x=".600" y="6.600" width="15" height="8" fill="#fff" stroke="#7abcf0" stroke-width="1.200"/><text x="8" y="13.200" font-family="Liberation Sans,sans-serif" font-size="6" fill="#4a9ce4" text-anchor="middle">ABC</text><path d="M18.500 4v12" stroke="#9cd0f6" stroke-width="1.200"/><circle cx="18.500" cy="6" r="1.300" fill="#6ab4ec"/><circle cx="18.500" cy="14.500" r="1.300" fill="#6ab4ec"/></svg>
<div class="t" style="left:1633px;top:709px;">文本开关</div>
<svg style="left:1606px;top:744px" width="20" height="20" viewBox="0 0 20 20"><rect x="0" y="5" width="15" height="10.500" fill="#cfe6f8"/><path d="M0 15.500l4-5 3 3 4-6 4 4v4z" fill="#1672c0"/><path d="M7.500 8l3-2.500 2 2" stroke="#e8202c" stroke-width="1.300" fill="none"/><rect x="1" y="9.500" width="2.500" height="3" fill="#2a9a3a"/><path d="M18.500 5.500v3M18.500 12v3" stroke="#4a9ce4" stroke-width="1.200"/><circle cx="18.500" cy="10.500" r=".9" fill="#4a9ce4"/></svg>
<div class="t" style="left:1633px;top:744px;">图形开关</div>
<svg style="left:1606px;top:779px" width="20" height="20" viewBox="0 0 20 20"><rect x="7" y="2" width="9.500" height="6" fill="#8a8a8a"/><rect x="7" y="8" width="9.500" height="10.500" fill="url(#gb3)"/><path d="M4.500 2v16.500M1.500 2.500h3M2.500 7.500h2M1.500 12.500h3M2.500 18h2" stroke="#4a9ce4" stroke-width="1"/></svg>
<div class="t" style="left:1633px;top:779px;">棒图</div>
<div style="left:1592px;top:921px;width:299px;height:60px;background:#f0f0f0;"></div>
<div style="left:1589px;top:921px;width:3px;height:60px;background:#707070;"></div>
<div style="left:1592px;top:921px;width:299px;height:2px;background:#fcfcfc;"></div>
<div class="t" style="left:1597px;top:927px;">复杂对象</div>
<div style="left:1592px;top:949px;width:299px;height:2px;background:#b4b4b4;"></div>
<div style="left:1592px;top:951px;width:299px;height:1px;background:#fbfbfb;"></div>
<div class="t" style="left:1597px;top:954px;">图形</div>
<div style="left:1592px;top:977px;width:299px;height:2px;background:#b4b4b4;"></div>
<div style="left:1592px;top:979px;width:299px;height:1px;background:#fbfbfb;"></div>
</div>
</body></html>
